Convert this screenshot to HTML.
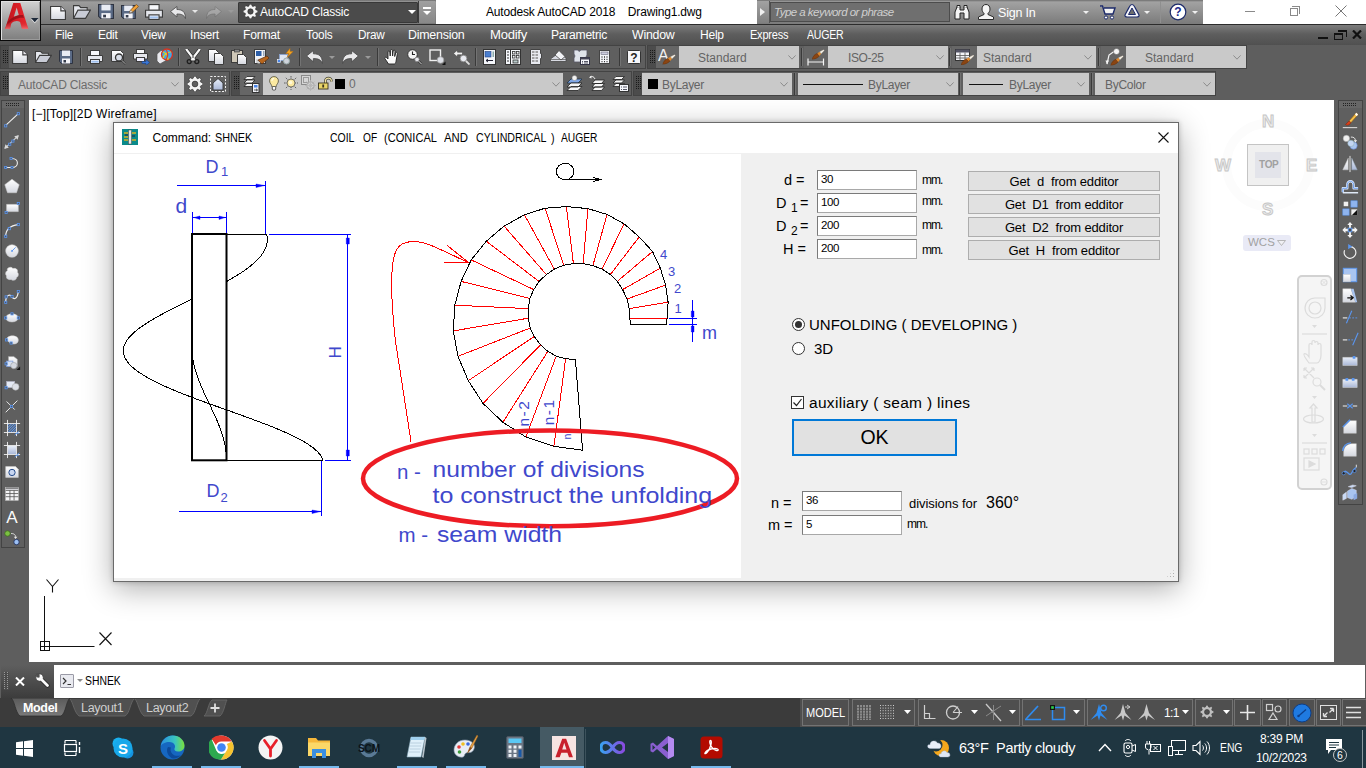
<!DOCTYPE html>
<html>
<head>
<meta charset="utf-8">
<title>AutoCAD</title>
<style>
html,body{margin:0;padding:0;}
body{width:1366px;height:768px;overflow:hidden;background:#5e5e5e;font-family:"Liberation Sans",sans-serif;position:relative;}
.abs{position:absolute;}
.t{position:absolute;white-space:nowrap;line-height:1;}
/* title */
#qat{left:0;top:0;width:436px;height:24px;background:linear-gradient(#6e6e6e 0,#9c9c9c 2px,#7a7a7a 23px);}
#titlew{left:436px;top:0;width:930px;height:24px;background:#fff;}
#srch{left:757px;top:0;width:446px;height:24px;background:linear-gradient(#6e6e6e 0,#a2a2a2 2px,#7c7c7c 23px);}
#appbtn{left:0;top:0;width:41px;height:41px;background:linear-gradient(#d2d2d2,#a8a8a8 45%,#7e7e7e);border:1px solid #0a0a0a;box-shadow:inset 1px 1px 0 #e0e0e0,inset -1px -1px 0 #9a9a9a;box-sizing:border-box;}
#menubar{left:0;top:24px;width:1366px;height:21px;background:linear-gradient(#7d7d7d 0%,#5e5e5e 45%,#505050 100%);border-top:1px solid #2c2c2c;box-sizing:border-box;}
.menu{position:absolute;top:28px;font-size:12.500px;letter-spacing:-.25px;color:#fff;white-space:nowrap;line-height:14px;}
.combo{position:absolute;background:#c9c9c9;box-sizing:border-box;}
.combo .t{color:#646464;font-size:12px;margin-top:1px;}
.tb{position:absolute;background:#5f5f5f;border:1px solid #434343;box-sizing:border-box;}
.grip{position:absolute;width:8px;height:22px;background:repeating-linear-gradient(0deg,#4c4c4c 0 1px,transparent 1px 2px) 2px 3px/5px 15px no-repeat,repeating-linear-gradient(90deg,#1a1a1a 0 1px,#4c4c4c 1px 2px) 2px 3px/5px 15px no-repeat,#4c4c4c;}
.sep{position:absolute;width:1px;height:18px;background:#3a3a3a;border-right:1px solid #737373;}
.vc{font-size:17px;font-weight:bold;color:#ebebeb;-webkit-text-stroke:.9px #c6c6c6;}
.sg{position:absolute;top:699px;height:27px;box-sizing:border-box;border:1px solid #737373;background:#4f4f4f;}
.ul{position:absolute;top:766px;width:40px;height:2px;background:#76b9ed;}
/* main */
#leftpal{left:1px;top:100px;width:24px;height:448px;background:#5f5f5f;border:1px solid #434343;box-sizing:border-box;}
#draw{left:29px;top:100px;width:1305px;height:562px;background:#fff;overflow:hidden;}
#rightpal{left:1338px;top:100px;width:25px;height:405px;background:#5f5f5f;border:1px solid #434343;box-sizing:border-box;}
#cmd{left:54px;top:665px;width:1311px;height:33px;background:#fff;}
#status{left:0;top:698px;width:1366px;height:29px;background:#3b3b3b;}
#taskbar{left:0;top:727px;width:1366px;height:41px;background:#1f3641;}
/* dialog */
#dlg{left:113px;top:122px;width:1066px;height:460px;background:#f0f0f0;border:1px solid #6a6a6a;box-sizing:border-box;box-shadow:0 0 5px rgba(0,0,0,.22),0 7px 28px rgba(0,0,0,.32);}
#dlgtitle{left:0;top:0;width:1064px;height:30px;background:#fff;}
#dlgpic{left:0;top:31px;width:627px;height:424px;background:#fff;overflow:hidden;}
.lb{color:#000;}
.inp{position:absolute;background:#fff;border:1px solid #7a7a7a;border-bottom-color:#a8a8a8;border-right-color:#a8a8a8;box-sizing:border-box;font-size:12px;}
.btn{position:absolute;background:#e1e1e1;border:1px solid #adadad;box-sizing:border-box;font-size:13px;letter-spacing:-.15px;text-align:center;color:#000;}
</style>
</head>
<body>
<!-- TITLE BAR -->
<div class="abs" id="qat"></div>
<div class="abs" id="titlew"></div>
<div class="abs" id="srch"></div>
<div class="abs" id="menubar"></div>
<div class="abs" id="appbtn"></div>

<!-- ICON DEFS -->
<svg width="0" height="0" style="position:absolute">
<defs>
<linearGradient id="gpaper" x1="0" y1="0" x2="0" y2="1"><stop offset="0" stop-color="#ffffff"/><stop offset="1" stop-color="#d5d8e0"/></linearGradient>
<linearGradient id="gblue" x1="0" y1="0" x2="0" y2="1"><stop offset="0" stop-color="#e8eef8"/><stop offset="1" stop-color="#aab8d8"/></linearGradient>
<symbol preserveAspectRatio="none" id="i-new" viewBox="1 2 14 13"><path d="M1.5 2.5h9l4 4v8h-13z" fill="url(#gpaper)" stroke="#3c3c3c" stroke-width="1"/><path d="M10.5 2.5v4h4" fill="#e8e8ee" stroke="#3c3c3c" stroke-width="1"/></symbol>
<symbol preserveAspectRatio="none" id="i-open" viewBox="1 3 16.500 11"><path d="M1.5 13.5v-10h5l1.5 1.5h6v2" fill="#e6e8ee" stroke="#3c3c3c"/><path d="M1.5 13.5l4-6.5h11.5l-4.5 6.5z" fill="#c9ccd6" stroke="#3c3c3c"/></symbol>
<symbol preserveAspectRatio="none" id="i-save" viewBox="1 1 14 14"><path d="M1.5 1.5h13v13h-11l-2-2z" fill="#5b6b86" stroke="#2e3340"/><rect x="4" y="1.5" width="8" height="5.5" fill="#e9ecf4"/><rect x="4" y="9.5" width="8" height="5" fill="#f4f4f8"/><rect x="5.5" y="11" width="2.5" height="2.5" fill="#333a4a"/></symbol>
<symbol preserveAspectRatio="none" id="i-saveas" viewBox="1 0 17 15"><path d="M1.5 1.5h13v13h-11l-2-2z" fill="#5b6b86" stroke="#2e3340"/><rect x="4" y="1.5" width="8" height="5.5" fill="#e9ecf4"/><rect x="4" y="9.5" width="8" height="5" fill="#f4f4f8"/><rect x="5.5" y="11" width="2.5" height="2.5" fill="#333a4a"/><path d="M9 9l1-3 5.5-5.5 2 2L12 8z" fill="#f2a33a" stroke="#7a4a10" stroke-width=".7"/><path d="M9 9l1-3 2 2z" fill="#fff" stroke="#555" stroke-width=".5"/></symbol>
<symbol preserveAspectRatio="none" id="i-print" viewBox="1 1 16 14"><rect x="4.5" y="1.5" width="9" height="5" fill="#f6f7fa" stroke="#3c3c3c"/><path d="M1.5 6.500h15v6h-15z" fill="#e4e6ec" stroke="#3c3c3c"/><rect x="4.500" y="10.500" width="9" height="4" fill="#dfe8f8" stroke="#3c3c3c"/><rect x="5.500" y="12" width="7" height="1.500" fill="#9fc0ee"/></symbol>
<symbol preserveAspectRatio="none" id="i-undo" viewBox="0.500 0.500 15 13"><path d="M1 6l6-5v3c5 0 8 2 8 9-1.500-3.500-3.500-4.500-8-4.500v3z" fill="#e8e8ea" stroke="#4a4a4a" stroke-width=".8"/></symbol>
<symbol preserveAspectRatio="none" id="i-redo" viewBox="0.500 0.500 15 13"><path d="M15 6l-6-5v3c-5 0-8 2-8 9 1.500-3.500 3.500-4.500 8-4.500v3z" fill="#e8e8ea" stroke="#4a4a4a" stroke-width=".8"/></symbol>
<symbol preserveAspectRatio="none" id="i-dd" viewBox="0 0 8 4"><path d="M0 0h8l-4 4z"/></symbol>
<symbol preserveAspectRatio="none" id="i-chev" viewBox="0 0 10 6"><path d="M.5.500l4.500 4.500 4.500-4.500" fill="none" stroke="#8a8a8a" stroke-width="1.200"/></symbol>
<symbol preserveAspectRatio="none" id="i-gear" viewBox="0.500 0.500 15 15"><path d="M13.32 6.24 L15.34 7.04 L15.34 8.96 L13.32 9.76 L13.00 10.51 L13.87 12.51 L12.51 13.87 L10.51 13.00 L9.76 13.32 L8.96 15.34 L7.04 15.34 L6.24 13.32 L5.49 13.00 L3.49 13.87 L2.13 12.51 L3.00 10.51 L2.68 9.76 L0.66 8.96 L0.66 7.04 L2.68 6.24 L3.00 5.49 L2.13 3.49 L3.49 2.13 L5.49 3.00 L6.24 2.68 L7.04 0.66 L8.96 0.66 L9.76 2.68 L10.51 3.00 L12.51 2.13 L13.87 3.49 L13.00 5.49Z M10.7 8 A2.7 2.7 0 1 0 5.3 8 A2.7 2.7 0 1 0 10.7 8Z" fill="#f4f4f4" fill-rule="evenodd" stroke="#2a2a2a" stroke-width=".6" stroke-linejoin="round"/></symbol>
<symbol preserveAspectRatio="none" id="i-brush" viewBox="0 0 13 10"><path d="M0 10C.8 7 2.800 4.800 5.500 3.800L7.700 6.500C5.500 8.700 3 9.700 0 10Z" fill="#8a4513" stroke="#5a2a08" stroke-width=".4"/><path d="M5.500 3.800L8 2.300 9.500 4.300 7.700 6.500Z" fill="#e0882a"/><path d="M8 2.300L12.400 0 13 .8 9.500 4.300Z" fill="#f6f2ea" stroke="#b8a890" stroke-width=".3"/></symbol>
</defs>
</svg>
<!-- QAT ICONS -->
<svg class="abs" style="left:50px;top:6px" width="16" height="14"><use href="#i-new" width="16" height="14"/></svg>
<svg class="abs" style="left:73px;top:5px" width="18" height="14"><use href="#i-open" width="18" height="14"/></svg>
<svg class="abs" style="left:98px;top:4px" width="16" height="15"><use href="#i-save" width="16" height="15"/></svg>
<svg class="abs" style="left:121px;top:4px" width="18" height="15"><use href="#i-saveas" width="18" height="15"/></svg>
<svg class="abs" style="left:145px;top:4px" width="18" height="16"><use href="#i-print" width="18" height="16"/></svg>
<svg class="abs" style="left:170px;top:6px" width="16" height="13"><use href="#i-undo" width="16" height="13"/></svg>
<svg class="abs" style="left:192px;top:10px;fill:#e6e6e6" width="6" height="3"><use href="#i-dd" width="6" height="3"/></svg>
<svg class="abs" style="left:206px;top:6px;opacity:.28" width="16" height="13"><use href="#i-redo" width="16" height="13"/></svg>
<svg class="abs" style="left:228px;top:10px;fill:#9a9a9a" width="6" height="3"><use href="#i-dd" width="6" height="3"/></svg>
<!-- workspace combo -->
<div class="abs" style="left:238px;top:2px;width:180px;height:21px;background:#4b4b4b;border:1px solid #383838;box-sizing:border-box;border-radius:1px"></div>
<svg class="abs" style="left:243px;top:4px" width="15" height="15"><use href="#i-gear" width="15" height="15"/></svg>
<div class="t" style="left:260px;top:6px;font-size:12px;color:#fff;letter-spacing:-.2px">AutoCAD Classic</div>
<svg class="abs" style="left:408px;top:10px;fill:#fff" width="8" height="5"><use href="#i-dd" width="8" height="4"/></svg>
<div class="abs" style="left:418px;top:1px;width:17px;height:22px;background:linear-gradient(#a0a0a0,#888);border-left:1px solid #3a3a3a;box-sizing:border-box"></div>
<div class="abs" style="left:423px;top:7px;width:8px;height:2px;background:#fff"></div>
<svg class="abs" style="left:423px;top:11px;fill:#fff" width="8" height="4"><use href="#i-dd" width="8" height="4"/></svg>
<!-- title text -->
<div class="t" style="left:486px;top:6px;font-size:12px;color:#000;letter-spacing:-.17px;white-space:pre">Autodesk AutoCAD 2018    Drawing1.dwg</div>


<!-- SEARCH AREA -->
<div class="abs" style="left:757px;top:1px;width:12px;height:22px;background:linear-gradient(#a2a2a2,#808080);border-right:1px solid #555"></div>
<svg class="abs" style="left:760px;top:8px" width="5" height="8"><path d="M0 0l5 4-5 4z" fill="#f0f0f0"/></svg>
<div class="abs" style="left:770px;top:2px;width:180px;height:20px;background:#6f6f6f;border:1px solid #4c4c4c;box-sizing:border-box"></div>
<div class="t" style="left:774px;top:7px;font-size:11.500px;font-style:italic;color:#cfcfcf;letter-spacing:-.52px">Type a keyword or phrase</div>
<svg class="abs" style="left:953px;top:4px" width="18" height="16" viewBox="0 0 18 16"><path d="M2 15v-7l2-5h3v3h4v-3h3l2 5v7h-5v-6h-4v6z" fill="#f4f4f4" stroke="#222" stroke-width="1"/><path d="M4 3.500v-2h3v2M11 3.500v-2h3v2" fill="#f4f4f4" stroke="#222"/></svg>
<svg class="abs" style="left:977px;top:3px" width="18" height="18" viewBox="0 0 18 18"><path d="M9 1.500c2.500 0 4 1.800 4 4.500 0 2-1 3.500-2 4.300v1.200l5.500 2.500v2.500h-15v-2.500l5.500-2.500v-1.200c-1-.8-2-2.300-2-4.300 0-2.700 1.500-4.500 4-4.500z" fill="#f6f6f6" stroke="#2a2a2a" stroke-width="1"/></svg>
<div class="t" style="left:998px;top:7px;font-size:12.500px;color:#fff;letter-spacing:-.2px">Sign In</div>
<svg class="abs" style="left:1083px;top:11px;fill:#f0f0f0" width="7" height="4"><use href="#i-dd" width="6" height="3"/></svg>
<svg class="abs" style="left:1099px;top:4px" width="18" height="16" viewBox="0 0 18 16"><path d="M1 2h2.500l2.500 8h8l2-6h-11" fill="#f4f4f4" stroke="#1c2a6a" stroke-width="1.400"/><circle cx="7" cy="13.500" r="1.600" fill="#fff" stroke="#1c2a6a"/><circle cx="13" cy="13.500" r="1.600" fill="#fff" stroke="#1c2a6a"/></svg>
<svg class="abs" style="left:1123px;top:3px" width="18" height="16" viewBox="0 0 18 16"><path d="M9 1.500c1.500 0 2 1 2.800 2.600l4 7.400c.8 1.600-.3 2.500-2 2.500h-9.600c-1.700 0-2.800-.9-2-2.500l4-7.400c.8-1.600 1.300-2.600 2.800-2.600z" fill="#f6f6fa" stroke="#1c2a6a" stroke-width="1.200"/><path d="M9 5l-3.500 6.500h7z" fill="#6e6e6e" stroke="#1c2a6a" stroke-width="1"/></svg>
<svg class="abs" style="left:1144px;top:11px;fill:#f0f0f0" width="7" height="4"><use href="#i-dd" width="6" height="3"/></svg>
<div class="abs" style="left:1160px;top:1px;width:1px;height:22px;background:#8f8f8f"></div>
<svg class="abs" style="left:1169px;top:3px" width="18" height="18" viewBox="0 0 18 18"><circle cx="9" cy="9" r="7.800" fill="#fff" stroke="#1c2a6a" stroke-width="1.200"/><text x="9" y="13.300" font-family="Liberation Sans" font-weight="bold" font-size="12" fill="#1c2a8a" text-anchor="middle">?</text></svg>
<svg class="abs" style="left:1192px;top:11px;fill:#f0f0f0" width="7" height="4"><use href="#i-dd" width="6" height="3"/></svg>
<!-- window controls -->
<div class="abs" style="left:1245px;top:11px;width:10px;height:1px;background:#8a8a8a"></div>
<div class="abs" style="left:1290px;top:8px;width:8px;height:8px;border:1px solid #8a8a8a;box-sizing:border-box"></div>
<div class="abs" style="left:1292px;top:6px;width:8px;height:8px;border-top:1px solid #8a8a8a;border-right:1px solid #8a8a8a;box-sizing:border-box"></div>
<svg class="abs" style="left:1335px;top:5px" width="12" height="12"><path d="M.5.500l11 11M11.500.500l-11 11" stroke="#777" stroke-width="1"/></svg>
<!-- MENU ITEMS -->
<div class="menu" style="left:55px;transform:scaleX(0.950);transform-origin:0 0">File</div>
<div class="menu" style="left:97.5px;transform:scaleX(0.954);transform-origin:0 0">Edit</div>
<div class="menu" style="left:141.3px;transform:scaleX(0.951);transform-origin:0 0">View</div>
<div class="menu" style="left:190px;transform:scaleX(0.974);transform-origin:0 0">Insert</div>
<div class="menu" style="left:243px;transform:scaleX(0.971);transform-origin:0 0">Format</div>
<div class="menu" style="left:305.5px;transform:scaleX(0.948);transform-origin:0 0">Tools</div>
<div class="menu" style="left:357.5px;transform:scaleX(0.941);transform-origin:0 0">Draw</div>
<div class="menu" style="left:408px;transform:scaleX(0.995);transform-origin:0 0">Dimension</div>
<div class="menu" style="left:489.5px;transform:scaleX(1.047);transform-origin:0 0">Modify</div>
<div class="menu" style="left:551px;transform:scaleX(0.967);transform-origin:0 0">Parametric</div>
<div class="menu" style="left:632.3px;transform:scaleX(0.989);transform-origin:0 0">Window</div>
<div class="menu" style="left:700.2px;transform:scaleX(0.963);transform-origin:0 0">Help</div>
<div class="menu" style="left:749.5px;transform:scaleX(0.880);transform-origin:0 0">Express</div>
<div class="menu" style="left:807px;transform:scaleX(0.845);transform-origin:0 0">AUGER</div>
<!-- MDI controls -->
<div class="abs" style="left:1318px;top:37px;width:10px;height:2px;background:#111"></div>
<div class="abs" style="left:1334px;top:33px;width:9px;height:7px;border:1px solid #111;border-top-width:2px;box-sizing:border-box"></div>
<div class="abs" style="left:1338px;top:30px;width:9px;height:7px;border-top:2px solid #111;border-right:1px solid #111;box-sizing:border-box"></div>
<svg class="abs" style="left:1352px;top:30px" width="10" height="9"><path d="M1 .500l8 8M9 .500l-8 8" stroke="#111" stroke-width="2.200"/></svg>
<!-- APP A logo -->
<svg class="abs" style="left:4px;top:2px" width="26" height="28" viewBox="0 0 26 28"><defs><linearGradient id="gA" x1="0" y1="0" x2="1" y2="0"><stop offset="0" stop-color="#b8141c"/><stop offset=".5" stop-color="#d81e26"/><stop offset="1" stop-color="#e8282e"/></linearGradient><linearGradient id="gA2" x1="0" y1="0" x2="0" y2="1"><stop offset=".7" stop-color="#d81e26" stop-opacity="0"/><stop offset="1" stop-color="#f08080" stop-opacity=".8"/></linearGradient></defs><path d="M1 27L9.300 1h7l8 26h-6.200l-2-7c-2.500-1.500-6-1.200-8.800 1.500l-1.500 5.500zM9.800 14.800l5-1.800-2.100-7.500z" fill="url(#gA)" fill-rule="evenodd"/><path d="M3.500 20c4-5 11-7.500 15.500-7l1 3c-5-.8-11 1-17.500 7.500z" fill="#8e0e16" opacity=".75"/><path d="M1 27L9.300 1h7l8 26h-6.200l-2-7c-2.500-1.500-6-1.200-8.800 1.500l-1.500 5.500zM9.800 14.800l5-1.800-2.100-7.500z" fill="url(#gA2)" fill-rule="evenodd"/></svg>
<svg class="abs" style="left:31px;top:18px" width="8" height="6"><path d="M0 1.200h7.500l-3.750 4z" fill="#e8e8e8"/><path d="M0 0h7.500l-3.750 4.300z" fill="#1e2a3a"/></svg>


<!-- TOOLBAR ROW 1 -->
<div class="tb" style="left:0;top:45px;width:646px;height:24px"></div>
<div class="tb" style="left:647px;top:45px;width:600px;height:24px"></div>
<div class="grip" style="left:1px;top:46px"></div>
<div class="grip" style="left:648px;top:46px"></div>
<svg class="abs" style="left:12px;top:50px" width="16" height="14"><use href="#i-new" width="16" height="14"/></svg>
<svg class="abs" style="left:35px;top:51px" width="17" height="12"><use href="#i-open" width="17" height="12"/></svg>
<svg class="abs" style="left:59px;top:50px" width="14" height="14"><use href="#i-save" width="14" height="14"/></svg>
<div class="sep" style="left:80px;top:48px"></div>
<svg class="abs" style="left:87px;top:50px" width="16" height="14"><use href="#i-print" width="16" height="14"/></svg>
<!-- preview -->
<svg class="abs" style="left:111px;top:49px" width="16" height="16" viewBox="0 0 16 16"><path d="M.5 1.500h9l3 3v8h-12z" fill="url(#gpaper)" stroke="#3c3c3c"/><circle cx="8" cy="8.500" r="3.500" fill="#d8dde8" stroke="#333" stroke-width="1.300"/><path d="M10.500 11l4 4" stroke="#333" stroke-width="2"/><path d="M10.800 11.300l3.500 3.500" stroke="#ddd" stroke-width=".8"/></svg>
<!-- publish -->
<svg class="abs" style="left:133px;top:49px" width="17" height="16" viewBox="0 0 17 16"><rect x="3.500" y=".5" width="8" height="4" fill="#f6f7fa" stroke="#3c3c3c"/><path d="M.5 4.500h14v5.500h-14z" fill="#e4e6ec" stroke="#3c3c3c"/><rect x="3.500" y="8.500" width="8" height="4" fill="#eef" stroke="#3c3c3c"/><path d="M9 12.500h4v-2l3.500 3-3.500 3v-2h-4z" fill="#3b78d8" stroke="#1d3f80" stroke-width=".6"/></svg>
<!-- 3dprint -->
<svg class="abs" style="left:156px;top:48px" width="17" height="17" viewBox="0 0 17 17"><path d="M1 6l4-3.500h6l-1 10-6 3.500-3-3z" fill="#e9e9ee" stroke="#555" stroke-width=".7"/><circle cx="11" cy="6.500" r="5.500" fill="#3fa7e8" stroke="#d8331f" stroke-width="1.300"/><path d="M7 4c3 1 5 4 5 8M15 4c-3 0-7 2-8 6" fill="none" stroke="#e8d21a" stroke-width="1.200"/><path d="M10 1.500c2 3 2 7 0 10" fill="none" stroke="#e23b2a" stroke-width="1.200"/></svg>
<div class="sep" style="left:178px;top:48px"></div>
<!-- cut -->
<svg class="abs" style="left:185px;top:49px" width="16" height="16" viewBox="0 0 16 16"><path d="M1.500 .5l8 10.500M14.500 .5l-8 10.500" stroke="#1e1e1e" stroke-width="3.400" stroke-linecap="round"/><path d="M1.500 .5l8 10.500M14.500 .5l-8 10.500" stroke="#f8f8f8" stroke-width="2.200" stroke-linecap="round"/><circle cx="4.200" cy="12.600" r="2" fill="none" stroke="#1e1e1e" stroke-width="1.300"/><circle cx="11.800" cy="12.600" r="2" fill="none" stroke="#1e1e1e" stroke-width="1.300"/><circle cx="8" cy="8" r=".8" fill="#1e1e1e"/></svg>
<!-- copy -->
<svg class="abs" style="left:208px;top:49px" width="17" height="16" viewBox="0 0 17 16"><path d="M.5.500h7l3 3v9h-10z" fill="url(#gpaper)" stroke="#3c3c3c"/><path d="M6.500 4.500h6l3 3v8h-9z" fill="url(#gpaper)" stroke="#3c3c3c"/></svg>
<!-- paste -->
<svg class="abs" style="left:231px;top:49px" width="17" height="16" viewBox="0 0 17 16"><rect x=".5" y="1.500" width="11" height="12" fill="#cfc8b8" stroke="#3c3c3c"/><rect x="3.500" y=".5" width="5" height="2.500" fill="#888" stroke="#333" stroke-width=".6"/><path d="M6.500 5.500h6l3 3v7h-9z" fill="url(#gpaper)" stroke="#3c3c3c"/></svg>
<!-- matchprop -->
<svg class="abs" style="left:254px;top:49px" width="17" height="16" viewBox="0 0 17 16"><rect x=".5" y=".5" width="11" height="14" fill="#f2f4f8" stroke="#3c3c3c"/><rect x="2" y="2" width="5.500" height="5" fill="#2d5fa8"/><rect x="9" y="2" width="1.500" height="5" fill="#9ab"/><path d="M4 11l4 4 7-6-2-2z" fill="#b5651d" stroke="#5a2d0c" stroke-width=".7"/><path d="M3 10.500l3 4.500-3-1z" fill="#fff" stroke="#777" stroke-width=".5"/></svg>
<!-- bedit -->
<svg class="abs" style="left:277px;top:48px" width="17" height="17" viewBox="0 0 17 17"><rect x="2.500" y="6.500" width="8" height="6" fill="#dfe6f2" stroke="#8aa0c8"/><rect x=".5" y="11.500" width="3" height="3" fill="#4a86e8" stroke="#fff" stroke-width=".6"/><circle cx="9.500" cy="13" r="3" fill="#d0d4dc" stroke="#9aa"/><path d="M13 .5l-4 5h3l-2 4 6-6h-3z" fill="#f6a623" stroke="#c8780a" stroke-width=".5"/></svg>
<div class="sep" style="left:299px;top:48px"></div>
<svg class="abs" style="left:306px;top:50px" width="17" height="14"><use href="#i-undo" width="17" height="14"/></svg>
<svg class="abs" style="left:329px;top:56px;fill:#9a9a9a" width="6" height="3"><use href="#i-dd" width="6" height="3"/></svg>
<svg class="abs" style="left:342px;top:50px" width="17" height="14"><use href="#i-redo" width="17" height="14"/></svg>
<svg class="abs" style="left:365px;top:56px;fill:#9a9a9a" width="6" height="3"><use href="#i-dd" width="6" height="3"/></svg>
<div class="sep" style="left:377px;top:48px"></div>
<!-- pan hand -->
<svg class="abs" style="left:384px;top:49px" width="16" height="16" viewBox="0 0 16 16"><path d="M4.500 15c-1-2-3-4-4-6 .5-1 1.500-1 2.500 0l1 1v-7c0-1.300 1.600-1.300 1.800 0l.4 4 .3-5.500c0-1.300 1.800-1.300 1.900 0l.2 5.500.6-5c.2-1.200 1.800-1.100 1.800.1l-.3 5.400 1-3.500c.4-1.100 1.800-.8 1.700.4l-1.400 8c-.3 1.500-1 2.600-1.500 2.600z" fill="#fafafa" stroke="#222" stroke-width=".9"/></svg>
<!-- zoom rt -->
<svg class="abs" style="left:407px;top:49px" width="16" height="16" viewBox="0 0 16 16"><circle cx="5.500" cy="5.500" r="4.800" fill="#f4f4f4" stroke="#333" stroke-width="1"/><path d="M5.500 2.500v3h2.500" fill="none" stroke="#222" stroke-width="1.100"/><path d="M9 9.500l5.500 5.500" stroke="#333" stroke-width="2.400"/><path d="M9.500 10l5 5" stroke="#ddd" stroke-width="1"/><circle cx="10" cy="10.500" r="2.200" fill="#e8e8ee" stroke="#777" stroke-width=".6"/></svg>
<!-- zoom window -->
<svg class="abs" style="left:429px;top:49px" width="17" height="16" viewBox="0 0 17 16"><rect x="1" y="1" width="10.500" height="10.500" fill="none" stroke="#f0f0f0" stroke-width="1.400"/><circle cx="11.500" cy="11" r="3.300" fill="#dcdfe6" stroke="#999" stroke-width=".7"/><path d="M16.500 12.500v3.500h-3.500z" fill="#111"/></svg>
<!-- zoom prev -->
<svg class="abs" style="left:453px;top:49px" width="17" height="16" viewBox="0 0 17 16"><path d="M.5 4.500l4-3.500v2.200h5v2.600h-5v2.200z" fill="#f2f2f2" stroke="#444" stroke-width=".6"/><circle cx="10.500" cy="9.500" r="3.300" fill="#e8eaf0" stroke="#888" stroke-width=".8"/><path d="M13 12l3.500 3.500" stroke="#ddd" stroke-width="1.800"/></svg>
<div class="sep" style="left:475px;top:48px"></div>
<!-- properties -->
<svg class="abs" style="left:483px;top:49px" width="13" height="16" viewBox="0 0 13 16"><rect x=".5" y=".5" width="12" height="15" fill="#f4f6fa" stroke="#333"/><rect x="2" y="2.500" width="6" height="5.500" fill="#4a7fd0" stroke="#1f3f80" stroke-width=".6"/><rect x="9.500" y="2.500" width="1.500" height="5.500" fill="#8aa"/><path d="M3 11.500h7M3 11.500l2-1.500M3 11.500l2 1.500" stroke="#223" stroke-width="1" fill="none"/></svg>
<!-- designcenter -->
<svg class="abs" style="left:505px;top:49px" width="16" height="16" viewBox="0 0 16 16"><rect x=".5" y=".5" width="15" height="15" fill="#f4f6fa" stroke="#333"/><path d="M5.500.500v15" stroke="#333"/><path d="M2 3h2M2 6h2M2 9h2M2 12h2" stroke="#333" stroke-width="1.200"/><rect x="7.500" y="2.500" width="2.500" height="2.500" fill="none" stroke="#333" stroke-width=".8"/><rect x="11.500" y="2.500" width="2.500" height="2.500" fill="none" stroke="#333" stroke-width=".8"/><rect x="7.500" y="6.500" width="2.500" height="2.500" fill="none" stroke="#333" stroke-width=".8"/><rect x="11.500" y="6.500" width="2.500" height="2.500" fill="none" stroke="#333" stroke-width=".8"/><rect x="8" y="11" width="5" height="3" fill="#bcc" stroke="#333" stroke-width=".8"/></svg>
<!-- toolpalettes -->
<svg class="abs" style="left:530px;top:49px" width="12" height="16" viewBox="0 0 12 16"><path d="M.5.500h10v4h1v5h-1v6h-10z" fill="#e8eaf0" stroke="#444"/><path d="M2 3h2.500M5.500 3h2.500M2 6h2.500M5.500 6h2.500M2 9h2.500M5.500 9h2.500M2 12h2.500M5.500 12h2.500" stroke="#888" stroke-width="1.600"/></svg>
<!-- sheetset -->
<svg class="abs" style="left:550px;top:50px" width="17" height="14" viewBox="0 0 17 14"><path d="M.5 9l8-6 7.500 5v3.500h-15.500z" fill="#d8dae2" stroke="#444" stroke-width=".7"/><path d="M5 5l4-4.500 6 6-4 3.500z" fill="#f2f3f6" stroke="#444" stroke-width=".8"/><path d="M.5 11.500h15.500M.5 9.500h15.500" stroke="#555" stroke-width=".7"/></svg>
<!-- markup -->
<svg class="abs" style="left:573px;top:49px" width="17" height="17" viewBox="0 0 17 17"><path d="M1 1h4l1 1.500 2-1.500h6v5l-1 2 1 2v3h-13v-4l1-2-1-2z" fill="#dfe3ea" stroke="#556" stroke-width=".8"/><rect x="7.500" y="8.500" width="9" height="7" fill="#f6f7fb" stroke="#334" /><rect x="7.500" y="8.500" width="9" height="2" fill="#445"/><path d="M9 12.500h1M11 12.500h4M9 14h1M11 14h4" stroke="#445" stroke-width=".9"/></svg>
<!-- calc -->
<svg class="abs" style="left:599px;top:50px" width="11" height="14" viewBox="0 0 11 14"><rect x=".5" y=".5" width="10" height="13" fill="#f4f5f8" stroke="#444"/><rect x="2" y="2" width="7" height="2.500" fill="#ccd" stroke="#556" stroke-width=".5"/><path d="M2.500 7h1M5 7h1M7.500 7h1M2.500 9.300h1M5 9.300h1M7.500 9.300h1M2.500 11.600h1M5 11.600h1M7.500 11.600h1" stroke="#333" stroke-width="1.300"/></svg>
<div class="sep" style="left:619px;top:48px"></div>
<!-- help -->
<svg class="abs" style="left:627px;top:50px" width="14" height="14" viewBox="0 0 14 14"><rect x=".5" y=".5" width="13" height="13" rx="1" fill="#f6f6f8" stroke="#333"/><text x="7" y="11.500" font-family="Liberation Sans" font-weight="bold" font-size="12" fill="#222" text-anchor="middle">?</text></svg>
<!-- styles toolbar -->
<div class="abs" style="left:656px;top:46px;width:23px;height:22px;background:#666"></div>
<svg class="abs" style="left:658px;top:48px" width="18" height="18" viewBox="0 0 18 18"><text x="0" y="13" font-family="Liberation Sans" font-size="16" fill="#f2f2f2">A</text><use href="#i-brush" x="4.500" y="6.500" width="13" height="10"/></svg>
<div class="combo" style="left:679px;top:46px;width:120px;height:22px"><div class="t" style="left:19px;top:5px">Standard</div></div>
<svg class="abs" style="left:788px;top:55px" width="8" height="5"><use href="#i-chev" width="8" height="5"/></svg>
<div class="sep" style="left:801px;top:48px"></div>
<div class="abs" style="left:804px;top:46px;width:24px;height:22px;background:#666"></div>
<svg class="abs" style="left:807px;top:48px" width="18" height="18" viewBox="0 0 18 18"><path d="M1 10.500v7M16.500 10.500v7M1 14h15.500" stroke="#f4f4f4" stroke-width="1.200" fill="none"/><use href="#i-brush" x="5" y="1.500" width="12.500" height="10"/></svg>
<div class="combo" style="left:828px;top:46px;width:120px;height:22px"><div class="t" style="left:20px;top:5px;letter-spacing:-.4px">ISO-25</div></div>
<svg class="abs" style="left:936px;top:55px" width="8" height="5"><use href="#i-chev" width="8" height="5"/></svg>
<div class="sep" style="left:949px;top:48px"></div>
<div class="abs" style="left:952px;top:46px;width:25px;height:22px;background:#666"></div>
<svg class="abs" style="left:955px;top:48px" width="19" height="18" viewBox="0 0 19 18"><rect x=".5" y="1.500" width="14" height="11" fill="#f4f4f8" stroke="#333"/><rect x=".5" y="1.500" width="14" height="3" fill="#556"/><path d="M.5 7.500h14M.5 10h14M5 4.500v8M10 4.500v8" stroke="#555" stroke-width=".8"/><use href="#i-brush" x="6" y="7" width="13" height="10"/></svg>
<div class="combo" style="left:977px;top:46px;width:119px;height:22px"><div class="t" style="left:6px;top:5px">Standard</div></div>
<svg class="abs" style="left:1084px;top:55px" width="8" height="5"><use href="#i-chev" width="8" height="5"/></svg>
<div class="sep" style="left:1098px;top:48px"></div>
<div class="abs" style="left:1101px;top:46px;width:25px;height:22px;background:#666"></div>
<svg class="abs" style="left:1105px;top:48px" width="19" height="18" viewBox="0 0 19 18"><path d="M2 16l2-9 5-3.500" fill="none" stroke="#f4f4f4" stroke-width="1.200"/><path d="M2 16.500l-1.500-4h3.500z" fill="#f4f4f4"/><circle cx="11.500" cy="3.500" r="3" fill="#f6f6f6" stroke="#555" stroke-width=".5"/><use href="#i-brush" x="5.500" y="7.500" width="13" height="10"/></svg>
<div class="combo" style="left:1126px;top:46px;width:120px;height:22px"><div class="t" style="left:19px;top:5px">Standard</div></div>
<svg class="abs" style="left:1233px;top:55px" width="8" height="5"><use href="#i-chev" width="8" height="5"/></svg>


<!-- TOOLBAR ROW 2 -->
<div class="tb" style="left:0;top:71px;width:230px;height:25px"></div>
<div class="tb" style="left:231px;top:71px;width:401px;height:25px"></div>
<div class="tb" style="left:633px;top:71px;width:583px;height:25px"></div>
<div class="grip" style="left:1px;top:72px;height:23px"></div>
<div class="grip" style="left:232px;top:72px;height:23px"></div>
<div class="grip" style="left:634px;top:72px;height:23px"></div>
<div class="combo" style="left:9px;top:73px;width:175px;height:22px"><div class="t" style="left:9px;top:5px;letter-spacing:-.2px;color:#6c6c6c">AutoCAD Classic</div></div>
<svg class="abs" style="left:171px;top:82px" width="8" height="5"><use href="#i-chev" width="8" height="5"/></svg>
<svg class="abs" style="left:187px;top:76px" width="16" height="16"><use href="#i-gear" width="16" height="16"/></svg>
<svg class="abs" style="left:209px;top:75px" width="18" height="18" viewBox="0 0 18 18"><rect x="1.500" y="1.500" width="15" height="15" fill="none" stroke="#f0f0f0" stroke-width="1" stroke-dasharray="2 1.500"/><path d="M4 15v-7l5-4.500 5 4.500v7z" fill="url(#gblue)" stroke="#333" stroke-width=".9"/></svg>
<!-- layers -->
<div class="abs" style="left:240px;top:72px;width:23px;height:23px;background:#666"></div>
<svg class="abs" style="left:243px;top:75px" width="17" height="18" viewBox="0 0 17 18"><path d="M4 1.500h8l-3 3h-8zM4 5h8l-3 3h-8zM4 8.500h8l-3 3h-8z" fill="#f6f6f6" stroke="#222" stroke-width=".8"/><rect x="9.500" y="8.500" width="6.500" height="9" fill="#f0f2f8" stroke="#333"/><rect x="11" y="10" width="3.500" height="2.500" fill="#4a86e8"/><path d="M11 15h3.500M13 13.800l1.500 1.200-1.500 1.200" stroke="#333" stroke-width=".8" fill="none"/></svg>
<div class="combo" style="left:263px;top:73px;width:300px;height:22px"></div>
<!-- bulb -->
<svg class="abs" style="left:269px;top:76px" width="10" height="15" viewBox="0 0 10 15"><path d="M5 .600c2.600 0 4.400 1.900 4.400 4.300 0 2-1.300 2.800-2 4.600l-.4 1.500h-4l-.4-1.500c-.7-1.800-2-2.600-2-4.600 0-2.400 1.800-4.300 4.400-4.300z" fill="#fbe9a0" stroke="#4a4a3a" stroke-width=".8"/><path d="M3 5a2.300 2.300 0 0 1 2-2.600" stroke="#fffbe6" stroke-width="1.100" fill="none"/><rect x="3.300" y="10.500" width="3.400" height="3.500" rx="1" fill="#fafafa" stroke="#333" stroke-width=".8"/></svg>
<!-- sun -->
<svg class="abs" style="left:284px;top:76px" width="14" height="14" viewBox="0 0 14 14"><path d="M7 0v14M0 7h14M1.800 1.800l10.400 10.400M12.200 1.800l-10.400 10.400" stroke="#4a4a4a" stroke-width=".8" stroke-dasharray="1.600 1"/><circle cx="7" cy="7" r="4" fill="#fbe9a0" stroke="#555" stroke-width=".8"/><circle cx="6.500" cy="6.500" r="1.800" fill="#fff8d8"/></svg>
<!-- vp freeze -->
<svg class="abs" style="left:301px;top:75px" width="15" height="16" viewBox="0 0 15 16"><rect x=".5" y=".5" width="9" height="9" fill="#d6d6d6" stroke="#8a8a8a"/><rect x="2.500" y="2.500" width="5" height="5" fill="none" stroke="#9a9a9a"/><circle cx="9.500" cy="10.500" r="3.800" fill="#cfcfcf" stroke="#a8a8a8"/><path d="M9.500 5v11M4 10.500h11M5.500 6.500l8 8M13.500 6.500l-8 8" stroke="#b4b4b4" stroke-width=".8"/></svg>
<!-- lock -->
<svg class="abs" style="left:318px;top:76px" width="15" height="14" viewBox="0 0 15 14"><path d="M7.500 7v-2.500c0-3.200 5.800-3.200 5.800 0v1" fill="none" stroke="#3a3a2a" stroke-width="2.600"/><path d="M7.500 7v-2.500c0-3.200 5.800-3.200 5.800 0v1" fill="none" stroke="#f0e2a8" stroke-width="1.300"/><rect x=".5" y="7" width="9.500" height="6" fill="#e8d468" stroke="#3a3420" stroke-width=".9"/><rect x="4.300" y="8.500" width="1.800" height="3" fill="#3a3420"/></svg>
<div class="abs" style="left:335px;top:79px;width:10px;height:10px;background:#000"></div>
<div class="t" style="left:349px;top:78px;font-size:12px;color:#6c6c6c">0</div>
<svg class="abs" style="left:552px;top:82px" width="8" height="5"><use href="#i-chev" width="8" height="5"/></svg>
<!-- layer tools -->
<svg class="abs" style="left:566px;top:75px" width="17" height="17" viewBox="0 0 17 17"><path d="M5 4h11l-4 4h-11z" fill="#7fa6e6" stroke="#234" stroke-width=".8"/><path d="M5 8h11l-4 4h-11zM5 11.500h11l-4 4h-11z" fill="#f6f6f6" stroke="#222" stroke-width=".8"/><circle cx="8.500" cy="3" r="2.500" fill="#f2f2f2" stroke="#888" stroke-width=".5"/></svg>
<svg class="abs" style="left:589px;top:75px" width="16" height="17" viewBox="0 0 16 17"><path d="M6 5h9.500l-3 3.500h-9.500zM6 8.500h9.500l-3 3.500h-9.500zM6 12h9.500l-3 3.500h-9.500z" fill="#f6f6f6" stroke="#222" stroke-width=".8"/><path d="M6 4c-1-2.500-3-3-5-2" fill="none" stroke="#f0f0f0" stroke-width="1"/><path d="M0 2.500l2.500-2v3z" fill="#f0f0f0"/></svg>
<svg class="abs" style="left:612px;top:75px" width="17" height="17" viewBox="0 0 17 17"><path d="M4 1.500h8.500l-3 3h-8.500zM4 5h8.500l-3 3h-8.500zM4 8.500h8.500l-3 3h-8.500z" fill="#f6f6f6" stroke="#222" stroke-width=".8"/><rect x="7.500" y="9.500" width="9" height="7" fill="#f6f7fb" stroke="#333"/><path d="M9 12h1M11 12h4M9 14.500h1M11 14.500h4" stroke="#445" stroke-width=".9"/></svg>
<!-- properties toolbar -->
<div class="combo" style="left:642px;top:73px;width:150px;height:22px"><div class="t" style="left:20px;top:5px;letter-spacing:-.3px">ByLayer</div></div>
<div class="abs" style="left:648px;top:79px;width:10px;height:10px;background:#000"></div>
<svg class="abs" style="left:780px;top:82px" width="8" height="5"><use href="#i-chev" width="8" height="5"/></svg>
<div class="sep" style="left:794px;top:73px;height:22px"></div>
<div class="combo" style="left:798px;top:73px;width:160px;height:22px"><div class="t" style="left:70px;top:5px;letter-spacing:-.3px">ByLayer</div></div>
<div class="abs" style="left:803px;top:84px;width:60px;height:1px;background:#111"></div>
<svg class="abs" style="left:946px;top:82px" width="8" height="5"><use href="#i-chev" width="8" height="5"/></svg>
<div class="sep" style="left:959px;top:73px;height:22px"></div>
<div class="combo" style="left:963px;top:73px;width:126px;height:22px"><div class="t" style="left:46px;top:5px;letter-spacing:-.3px">ByLayer</div></div>
<div class="abs" style="left:969px;top:84px;width:34px;height:1px;background:#111"></div>
<svg class="abs" style="left:1077px;top:82px" width="8" height="5"><use href="#i-chev" width="8" height="5"/></svg>
<div class="sep" style="left:1091px;top:73px;height:22px"></div>
<div class="combo" style="left:1095px;top:73px;width:120px;height:22px"><div class="t" style="left:10px;top:5px;letter-spacing:-.3px">ByColor</div></div>
<svg class="abs" style="left:1203px;top:82px" width="8" height="5"><use href="#i-chev" width="8" height="5"/></svg>

<!-- MAIN -->
<div class="abs" id="leftpal"></div>
<div class="abs" id="draw"></div>
<div class="abs" id="rightpal"></div>
<div class="abs" id="cmd"></div>
<div class="abs" id="status"></div>
<div class="abs" id="taskbar"></div>
<!-- LEFT PALETTE ICONS -->
<div class="abs" style="left:2px;top:101px;width:22px;height:7px;background:#676767"></div><div class="abs" style="left:6px;top:103px;width:14px;height:4px;background:repeating-linear-gradient(0deg,#676767 0 1px,transparent 1px 2px),repeating-linear-gradient(90deg,#222 0 1px,#676767 1px 2px)"></div>
<svg class="abs" style="left:3px;top:111px" width="18" height="18" viewBox="0 0 20 20"><path d="M3 16L17 3" stroke="#f0f0f0" stroke-width="1.200"/><rect x="1.8" y="15.3" width="2.400" height="2.400" fill="#50555f" stroke="#5a96f0" stroke-width=".9"/><rect x="15.8" y="1.8" width="2.400" height="2.400" fill="#50555f" stroke="#5a96f0" stroke-width=".9"/></svg>
<svg class="abs" style="left:3px;top:133px" width="18" height="18" viewBox="0 0 20 20"><path d="M2 17L17 3" stroke="#d8d8d8" stroke-width="1.200"/><path d="M17.500 2.500l-5 1.200 3.800 3.800zM1.500 17.500l5-1.200-3.800-3.800z" fill="#d8d8d8"/><rect x="6.3" y="11.3" width="2.400" height="2.400" fill="#50555f" stroke="#5a96f0" stroke-width=".9"/><rect x="9.8" y="7.8" width="2.400" height="2.400" fill="#50555f" stroke="#5a96f0" stroke-width=".9"/></svg>
<svg class="abs" style="left:3px;top:154px" width="18" height="18" viewBox="0 0 20 20"><path d="M3 15h7c8 0 8-10 0-10h-1" fill="none" stroke="#f0f0f0" stroke-width="1.200"/><rect x="1.8" y="13.8" width="2.400" height="2.400" fill="#50555f" stroke="#5a96f0" stroke-width=".9"/><rect x="8.8" y="13.8" width="2.400" height="2.400" fill="#50555f" stroke="#5a96f0" stroke-width=".9"/><rect x="7.8" y="3.8" width="2.400" height="2.400" fill="#50555f" stroke="#5a96f0" stroke-width=".9"/></svg>
<svg class="abs" style="left:3px;top:177px" width="18" height="18" viewBox="0 0 20 20"><path d="M10 2.500l8 6-3 9h-10l-3-9z" fill="url(#gpaper)" stroke="#ccc" stroke-width=".6"/></svg>
<svg class="abs" style="left:3px;top:199px" width="18" height="18" viewBox="0 0 20 20"><path d="M4 6h13v8h-13z" fill="url(#gpaper)" stroke="#ccc" stroke-width=".6"/><rect x="2.3" y="13.8" width="2.400" height="2.400" fill="#50555f" stroke="#5a96f0" stroke-width=".9"/><rect x="15.8" y="3.8" width="2.400" height="2.400" fill="#50555f" stroke="#5a96f0" stroke-width=".9"/></svg>
<svg class="abs" style="left:3px;top:221px" width="18" height="18" viewBox="0 0 20 20"><path d="M3 17c0-8 5-12 14-13" fill="none" stroke="#f0f0f0" stroke-width="1.200"/><rect x="1.8" y="15.8" width="2.400" height="2.400" fill="#50555f" stroke="#5a96f0" stroke-width=".9"/><rect x="5.8" y="7.3" width="2.400" height="2.400" fill="#50555f" stroke="#5a96f0" stroke-width=".9"/><rect x="15.8" y="2.8" width="2.400" height="2.400" fill="#50555f" stroke="#5a96f0" stroke-width=".9"/></svg>
<svg class="abs" style="left:3px;top:242px" width="18" height="18" viewBox="0 0 20 20"><circle cx="10" cy="10" r="7" fill="url(#gpaper)" stroke="#ccc" stroke-width=".6"/><path d="M10 10l4-4" stroke="#5a96f0" stroke-width="1"/><circle cx="10" cy="10" r="1" fill="#5a96f0"/></svg>
<svg class="abs" style="left:3px;top:265px" width="18" height="18" viewBox="0 0 20 20"><path d="M5 4c2-2 5-2 6 0 3-1 6 1 5 4 2 2 1 5-1 6 0 3-4 4-6 2-3 1-6-1-5-4-2-2-1-5 1-6-.5-1 0-2 0-2z" fill="url(#gpaper)" stroke="#ccc" stroke-width=".6"/></svg>
<svg class="abs" style="left:3px;top:287px" width="18" height="18" viewBox="0 0 20 20"><path d="M3 17c0-9 5-9 7-6s6 3 7-6" fill="none" stroke="#f0f0f0" stroke-width="1.400"/><rect x="1.8" y="15.8" width="2.400" height="2.400" fill="#50555f" stroke="#5a96f0" stroke-width=".9"/><rect x="2.3" y="9.8" width="2.400" height="2.400" fill="#50555f" stroke="#5a96f0" stroke-width=".9"/><rect x="8.8" y="9.3" width="2.400" height="2.400" fill="#50555f" stroke="#5a96f0" stroke-width=".9"/><rect x="15.8" y="3.8" width="2.400" height="2.400" fill="#50555f" stroke="#5a96f0" stroke-width=".9"/></svg>
<svg class="abs" style="left:3px;top:308px" width="18" height="18" viewBox="0 0 20 20"><ellipse cx="10" cy="11" rx="7" ry="4.500" fill="url(#gpaper)" stroke="#ccc" stroke-width=".6"/><rect x="1.8" y="9.8" width="2.400" height="2.400" fill="#50555f" stroke="#5a96f0" stroke-width=".9"/><rect x="8.8" y="5.3" width="2.400" height="2.400" fill="#50555f" stroke="#5a96f0" stroke-width=".9"/><rect x="15.8" y="9.8" width="2.400" height="2.400" fill="#50555f" stroke="#5a96f0" stroke-width=".9"/></svg>
<svg class="abs" style="left:3px;top:330px" width="18" height="18" viewBox="0 0 20 20"><path d="M4 11c0-6 13-6 13 0s-8 5-10 3" fill="url(#gpaper)" stroke="#ccc" stroke-width=".6"/><rect x="2.8" y="9.8" width="2.400" height="2.400" fill="#50555f" stroke="#5a96f0" stroke-width=".9"/><rect x="7.8" y="13.3" width="2.400" height="2.400" fill="#50555f" stroke="#5a96f0" stroke-width=".9"/></svg>
<svg class="abs" style="left:3px;top:353px" width="18" height="18" viewBox="0 0 20 20"><path d="M6 4h6l4 3v8h-10z" fill="url(#gpaper)" stroke="#999" stroke-width=".6"/><rect x="4" y="9" width="7" height="6" fill="#d8e2f4" stroke="#7a9ad8" stroke-width=".8"/><circle cx="12" cy="14" r="3.500" fill="#d4d8e0" stroke="#999" stroke-width=".6"/><rect x="2.3" y="10.8" width="2.400" height="2.400" fill="#50555f" stroke="#5a96f0" stroke-width=".9"/><path d="M19 15v4h-4z" fill="#111"/></svg>
<svg class="abs" style="left:3px;top:376px" width="18" height="18" viewBox="0 0 20 20"><rect x="4" y="6" width="9" height="7" fill="#e4e9f4" stroke="#aab" stroke-width=".7"/><circle cx="14" cy="12" r="3.800" fill="#dcdfe6" stroke="#aaa" stroke-width=".6"/><rect x="2.3" y="11.8" width="2.400" height="2.400" fill="#50555f" stroke="#5a96f0" stroke-width=".9"/></svg>
<svg class="abs" style="left:3px;top:397px" width="18" height="18" viewBox="0 0 20 20"><path d="M3 17L16 4M4 5l9 9" stroke="#e8e8e8" stroke-width="1.100"/><rect x="8.3" y="9.3" width="2.400" height="2.400" fill="#50555f" stroke="#5a96f0" stroke-width=".9"/></svg>
<svg class="abs" style="left:3px;top:419px" width="18" height="18" viewBox="0 0 20 20"><defs><pattern id="hp" width="2" height="2" patternUnits="userSpaceOnUse" patternTransform="rotate(45)"><rect width="1" height="2" fill="#5a96f0"/></pattern></defs><path d="M5 1v18M15 1v18M1 5h18M1 15h18" stroke="#f0f0f0" stroke-width="1"/><rect x="5.500" y="5.500" width="9" height="9" fill="url(#hp)"/><path d="M13 18l5-5" stroke="#5a96f0" stroke-width="1"/><path d="M14 16h4" stroke="#5a96f0" stroke-width=".8"/></svg>
<svg class="abs" style="left:3px;top:441px" width="18" height="18" viewBox="0 0 20 20"><path d="M5 1v18M15 1v18M1 5h18M1 15h18" stroke="#f0f0f0" stroke-width="1"/><rect x="5.500" y="5.500" width="9" height="9" fill="url(#gblue)"/><path d="M13 18l5-5" stroke="#5a96f0" stroke-width="1"/><path d="M14 16h4" stroke="#5a96f0" stroke-width=".8"/></svg>
<svg class="abs" style="left:3px;top:463px" width="18" height="18" viewBox="0 0 20 20"><path d="M3 4h11l3 3v9h-14z" fill="url(#gpaper)" stroke="#ccc" stroke-width=".6"/><circle cx="10" cy="10.500" r="3.500" fill="#c8d6f0" stroke="#234a8a" stroke-width="1.100"/></svg>
<svg class="abs" style="left:3px;top:485px" width="18" height="18" viewBox="0 0 20 20"><rect x="3" y="3" width="14" height="14" fill="#f4f4f6" stroke="#ccc" stroke-width=".6"/><rect x="3" y="3" width="14" height="3" fill="#e0e0e4"/><path d="M3 6h14M3 9.500h14M3 13h14M7.700 6v11M12.300 6v11" stroke="#555" stroke-width=".9"/><path d="M3 3.500h14" stroke="#444" stroke-width="1"/></svg>
<svg class="abs" style="left:3px;top:507px" width="18" height="18" viewBox="0 0 20 20"><text x="10" y="17.500" font-family="Liberation Sans" font-size="19" fill="#fafafa" text-anchor="middle">A</text></svg>
<svg class="abs" style="left:3px;top:529px" width="18" height="18" viewBox="0 0 20 20"><circle cx="5" cy="5" r="3" fill="#7bc043" stroke="#3a6a1a" stroke-width=".8"/><circle cx="15" cy="14.500" r="3" fill="#9cc0f4" stroke="#1a2a5a" stroke-width=".9"/><path d="M9 5c4 0 5 2 5 4" fill="none" stroke="#e8e8e8" stroke-width="1"/><path d="M12 8.500l2 2.500 2-2.500z" fill="#e8e8e8"/></svg>
<!-- RIGHT PALETTE ICONS -->
<div class="abs" style="left:1339px;top:101px;width:23px;height:7px;background:#676767"></div><div class="abs" style="left:1343px;top:103px;width:14px;height:4px;background:repeating-linear-gradient(0deg,#676767 0 1px,transparent 1px 2px),repeating-linear-gradient(90deg,#222 0 1px,#676767 1px 2px)"></div>
<svg class="abs" style="left:1341px;top:111px" width="18" height="18" viewBox="0 0 20 20"><path d="M17 2l-8 9 2 2 8-9z" fill="#f6c04a" stroke="#8a5a10" stroke-width=".6"/><path d="M17 2l2 2-1.500 1.700-2-2z" fill="#fff"/><path d="M9 11l-4 4c1 1 3 1 4.500 0l1.500-2z" fill="#d8401a" stroke="#7a200a" stroke-width=".5"/><path d="M2 18.500h16" stroke="#f0f0f0" stroke-width="1"/></svg>
<svg class="abs" style="left:1341px;top:133px" width="18" height="18" viewBox="0 0 20 20"><circle cx="6" cy="6" r="3.500" fill="#f0f0f0" stroke="#aaa" stroke-width=".5"/><circle cx="14" cy="14" r="4" fill="#a8c4f0" stroke="#6a8ad0" stroke-width=".7"/><circle cx="11" cy="11.500" r="3.500" fill="#c4d6f4" stroke="#8aa" stroke-width=".5"/><path d="M11 4.500c3 0 5 1 5 4" fill="none" stroke="#f0f0f0" stroke-width="1"/><path d="M14 8l2 2.500 2-2.500z" fill="#f0f0f0"/></svg>
<svg class="abs" style="left:1341px;top:155px" width="18" height="18" viewBox="0 0 20 20"><path d="M10 1v18" stroke="#f0f0f0" stroke-width="1"/><path d="M8 3.500v13h-6z" fill="url(#gpaper)" stroke="#ccc" stroke-width=".5"/><path d="M12 3.500v13h6z" fill="url(#gblue)" stroke="#9ab" stroke-width=".5"/></svg>
<svg class="abs" style="left:1341px;top:177px" width="18" height="18" viewBox="0 0 20 20"><path d="M2 17v-4.500h5v-4c0-5 7-5 7 0v4h5" fill="none" stroke="#e4eefc" stroke-width="2.600" stroke-linejoin="round"/><path d="M2 17v-4.500h5v-4c0-5 7-5 7 0v4h5" fill="none" stroke="#4a86e8" stroke-width=".9" stroke-linejoin="round"/><path d="M2 17.500h17" stroke="#e4eefc" stroke-width="1.600"/></svg>
<svg class="abs" style="left:1341px;top:199px" width="18" height="18" viewBox="0 0 20 20"><rect x="3" y="3" width="5" height="5" fill="#f0f0f0"/><rect x="11" y="2" width="7" height="7" fill="#8fb4ee" stroke="#5a96f0" stroke-width=".6"/><rect x="2" y="11" width="7" height="7" fill="#8fb4ee" stroke="#5a96f0" stroke-width=".6"/><rect x="11.500" y="11.500" width="6.500" height="6.500" fill="#f0f0f0"/><path d="M18 12v6h-6z" fill="#111"/></svg>
<svg class="abs" style="left:1341px;top:221px" width="18" height="18" viewBox="0 0 20 20"><path d="M10 1l3 3.500h-2v4h4v-2l3.500 3.500-3.500 3.500v-2h-4v4h2l-3 3.500-3-3.500h2v-4h-4v2l-3.500-3.500 3.500-3.500v2h4v-4h-2z" fill="#f4f4f4"/><rect x="8" y="8" width="4" height="4" fill="#4a4a4a" stroke="#5a96f0" stroke-width="1"/></svg>
<svg class="abs" style="left:1341px;top:243px" width="18" height="18" viewBox="0 0 20 20"><path d="M10 4a6.500 6.500 0 1 1-6 4" fill="none" stroke="#f0f0f0" stroke-width="1.300"/><path d="M8 1l4.500 3-4.500 3z" fill="#5a96f0"/></svg>
<svg class="abs" style="left:1341px;top:266px" width="18" height="18" viewBox="0 0 20 20"><rect x="2.500" y="2.500" width="15" height="15" fill="#a8c4f0" stroke="#5a96f0" stroke-width="1"/><rect x="2.500" y="9.500" width="8" height="8" fill="url(#gpaper)" stroke="#ccc" stroke-width=".6"/></svg>
<svg class="abs" style="left:1341px;top:287px" width="18" height="18" viewBox="0 0 20 20"><path d="M2 2h9l5 15h-14z" fill="url(#gpaper)" stroke="#ccc" stroke-width=".5"/><path d="M11 2l5 15h2l-4-15z" fill="#a8c4f0"/><path d="M7 12h6M10.500 9.500l3 2.500-3 2.500" stroke="#111" stroke-width="1.400" fill="none"/></svg>
<svg class="abs" style="left:1341px;top:308px" width="18" height="18" viewBox="0 0 20 20"><path d="M2 11h5" stroke="#f0f0f0" stroke-width="1.200"/><path d="M9 11h9" stroke="#5a96f0" stroke-width="1" stroke-dasharray="2 1.500"/><path d="M6 17l6-14" stroke="#5a96f0" stroke-width="1.200"/></svg>
<svg class="abs" style="left:1341px;top:330px" width="18" height="18" viewBox="0 0 20 20"><path d="M2 11h5" stroke="#f0f0f0" stroke-width="1.200"/><path d="M8 11h6" stroke="#5a96f0" stroke-width="1" stroke-dasharray="2 1.500"/><path d="M13 17l6-14" stroke="#5a96f0" stroke-width="1.200"/></svg>
<svg class="abs" style="left:1341px;top:352px" width="18" height="18" viewBox="0 0 20 20"><path d="M2 6h16v9h-16z" fill="url(#gblue)" stroke="#ddd" stroke-width=".5"/><rect x="13" y="4.500" width="3" height="3" fill="#5a96f0"/></svg>
<svg class="abs" style="left:1341px;top:374px" width="18" height="18" viewBox="0 0 20 20"><path d="M2 6h16v9h-16z" fill="url(#gblue)" stroke="#ddd" stroke-width=".5"/><rect x="5" y="4.500" width="3" height="3" fill="#5a96f0"/><rect x="12" y="4.500" width="3" height="3" fill="#5a96f0"/></svg>
<svg class="abs" style="left:1341px;top:397px" width="18" height="18" viewBox="0 0 20 20"><path d="M2 10h5M13 10h5" stroke="#f0f0f0" stroke-width="1.200"/><path d="M7 7.500l6 5M13 7.500l-6 5" stroke="#5a96f0" stroke-width="1.200"/></svg>
<svg class="abs" style="left:1341px;top:418px" width="18" height="18" viewBox="0 0 20 20"><path d="M3 17v-7l7-7h7v14z" fill="url(#gpaper)" stroke="#ccc" stroke-width=".5"/><path d="M2 10l8-8" stroke="#5a96f0" stroke-width="1.500"/></svg>
<svg class="abs" style="left:1341px;top:441px" width="18" height="18" viewBox="0 0 20 20"><path d="M3 17v-5c0-5 4-9 9-9h5v14z" fill="url(#gpaper)" stroke="#ccc" stroke-width=".5"/><path d="M2 11c0-5 4-9 9-9" fill="none" stroke="#5a96f0" stroke-width="1.500"/></svg>
<svg class="abs" style="left:1341px;top:462px" width="18" height="18" viewBox="0 0 20 20"><path d="M3 12c3-6 6 6 9 0s3-4 5-6" fill="none" stroke="#5a96f0" stroke-width="1.400"/><circle cx="3" cy="12.500" r="1.800" fill="#222" stroke="#5a96f0" stroke-width=".8"/><circle cx="15" cy="10" r="1.800" fill="#222" stroke="#5a96f0" stroke-width=".8"/><path d="M17 3v3" stroke="#f0f0f0"/></svg>
<svg class="abs" style="left:1341px;top:484px" width="18" height="18" viewBox="0 0 20 20"><path d="M7 8l5-3 5 2v7l-5 3-5-2z" fill="#a8c4f0" stroke="#dde" stroke-width=".5"/><path d="M2 12l4-3v7l-4 2zM8 3l5-2 4 1-5 2z" fill="#c8daf6" stroke="#dde" stroke-width=".5"/><path d="M14 12l4-2v6l-4 2z" fill="#8aa8e0"/></svg>
<!-- VIEWPORT STUFF -->
<div class="t" style="left:32px;top:108px;font-size:12px;color:#000;letter-spacing:.2px">[−][Top][2D Wireframe]</div>
<svg class="abs" style="left:36px;top:574px" width="84" height="82" viewBox="0 0 84 82"><path d="M8.500 22v45.500M13.500 72.500h45" stroke="#111" stroke-width="1" fill="none"/><rect x="4.500" y="67.500" width="9" height="9" fill="none" stroke="#111"/><path d="M8.500 67.500v9M4.500 72.500h9" stroke="#111" stroke-width="1"/><path d="M10.500 5.500l6 7 6-7M16.500 12.500v6" stroke="#111" stroke-width="1.100" fill="none"/><path d="M63.500 58.500l12 12.500M75.500 58.500l-12 12.500" stroke="#111" stroke-width="1.100"/></svg>
<!-- viewcube -->
<div class="abs" style="left:1222px;top:119px;width:92px;height:92px;border-radius:50%;border:9px solid #fcfcfc;box-sizing:border-box"></div>
<div class="abs" style="left:1247px;top:144px;width:42px;height:42px;background:#f0f0f0;border:1px solid #c4c4c4;box-sizing:border-box"></div>
<div class="abs" style="left:1255px;top:152px;width:26px;height:26px;background:#e3e4ea"></div>
<div class="t" style="left:1259px;top:160px;font-size:10px;font-weight:bold;color:#a0a0a0;letter-spacing:-.3px">TOP</div>
<div class="t vc" style="left:1262px;top:113px">N</div>
<div class="t vc" style="left:1262px;top:201px">S</div>
<div class="t vc" style="left:1215px;top:157px">W</div>
<div class="t vc" style="left:1306px;top:157px">E</div>
<div class="abs" style="left:1243px;top:235px;width:48px;height:16px;background:#e9eaf6;border-radius:3px"></div>
<div class="t" style="left:1248px;top:237px;font-size:11.500px;color:#a2a2a2">WCS</div>
<svg class="abs" style="left:1277px;top:240px" width="9" height="6"><path d="M.5.500h8l-4 5z" fill="#f0f0f4" stroke="#b0b0b0" stroke-width=".9"/></svg>
<!-- navbar -->
<div class="abs" style="left:1297px;top:275px;width:35px;height:215px;background:#f5f5f5;border:2px solid #d2d2d2;border-radius:5px;box-sizing:border-box"></div>
<svg class="abs" style="left:1297px;top:275px" width="35" height="215" viewBox="0 0 35 215" fill="none" stroke="#dcdcdc" stroke-width="1.200"><circle cx="27" cy="7.500" r="3"/><path d="M25 5.500l4 4M29 5.500l-4 4" stroke-width=".8"/><path d="M8 33a10 10 0 0 1 10-10h10v10a10 10 0 0 1-20 0z"/><circle cx="18" cy="33" r="6"/><path d="M15 50h5l-2.500 3z" fill="#dcdcdc" stroke="none"/><path d="M5 59h25"/><path d="M12 88c-3-4-6-8-5-9s3 0 5 3v-12c0-2 3-2 3 0v-3c0-2 3-2 3 0v1c0-2 3-2 3 0v2c0-2 3-2 3 0v10c0 4-2 8-4 8z"/><path d="M7 93l10 10M17 93l-10 10M7 93h3M7 93v3M17 93h-3M17 93v3M7 103h3M7 103v-3"/><circle cx="20" cy="107" r="4"/><path d="M23 110l5 5" stroke-width="2"/><path d="M15 121h5l-2.500 3z" fill="#dcdcdc" stroke="none"/><path d="M15 147v-14h-2l3.500-4 3.500 4h-2v14z"/><ellipse cx="16.500" cy="144" rx="10" ry="4"/><path d="M15 159h5l-2.500 3z" fill="#dcdcdc" stroke="none"/><path d="M5 168h25"/><rect x="7" y="174" width="5" height="5"/><rect x="15" y="174" width="5" height="5"/><rect x="23" y="174" width="5" height="5"/><rect x="7" y="183" width="15" height="12"/><path d="M12 186v6l6-3z" fill="#dcdcdc"/><circle cx="27" cy="207" r="3"/><path d="M25 207h4" stroke-width=".8"/></svg>
<!-- COMMAND LINE -->
<div class="abs" style="left:1px;top:665px;width:53px;height:33px;background:linear-gradient(#5e5e5e,#3c3c3c)"></div>
<div class="abs" style="left:4px;top:672px;width:5px;height:18px;background:repeating-linear-gradient(0deg,#4c4c4c 0 1px,transparent 1px 2px),repeating-linear-gradient(90deg,#9a9a9a 0 1px,#4c4c4c 1px 2px,#4c4c4c 2px 3px)"></div>
<svg class="abs" style="left:15px;top:677px" width="10" height="9"><path d="M1 .5l8 8M9 .5l-8 8" stroke="#fff" stroke-width="2"/></svg>
<svg class="abs" style="left:35px;top:673px" width="15" height="15" viewBox="0 0 15 15"><path d="M5.500 5.500l7 7" stroke="#222" stroke-width="4.200" stroke-linecap="round"/><circle cx="4.500" cy="4.500" r="3.800" fill="#fafafa" stroke="#222" stroke-width=".7"/><path d="M5.500 5.500l7 7" stroke="#fafafa" stroke-width="2.800" stroke-linecap="round"/><path d="M4.500 4.500l-4-4h4z" fill="#4c4c4c" stroke="none"/><path d="M4.200 4.800v-3.500l-3 0 0 3z" fill="#4e4e4e"/></svg>
<div class="abs" style="left:60px;top:674px;width:14px;height:14px;background:#e9eaf0;border:1px solid #9a9aa6;box-sizing:border-box;border-radius:1px"></div>
<svg class="abs" style="left:62px;top:677px" width="10" height="8"><path d="M1 1l3 3-3 3M5.500 7.500h3.500" stroke="#333" stroke-width="1.200" fill="none"/></svg>
<svg class="abs" style="left:77px;top:679px;fill:#8a8a8a" width="6" height="3"><use href="#i-dd" width="6" height="3"/></svg>
<div class="t" style="left:85px;top:675px;font-size:12px;color:#000;transform:scaleX(.865);transform-origin:0 0">SHNEK</div>
<!-- LAYOUT TABS -->
<svg class="abs" style="left:10px;top:698px" width="222" height="20" viewBox="0 0 222 20"><defs><linearGradient id="gtab" x1="0" y1="0" x2="0" y2="1"><stop offset="0" stop-color="#5a5a5a"/><stop offset="1" stop-color="#7a7a7a"/></linearGradient></defs>
<path d="M1 0c4 3 4 14 9 18h41c5-3 5-15 9-18z" fill="url(#gtab)" stroke="#2e2e2e" stroke-width=".8"/>
<path d="M60 1c3 3 4 13 9 17h46c5-3 5-13 9-17" fill="#505050" stroke="#666" stroke-width=".9"/>
<path d="M125 1c3 3 4 13 9 17h47c5-3 5-13 9-17" fill="#505050" stroke="#666" stroke-width=".9"/>
<path d="M194 18c4-3 4-13 8-16h15c-2 3-3 13-7 16z" fill="#505050" stroke="#666" stroke-width=".9"/>
<path d="M205 5.500v9M200.500 10h9" stroke="#e0e0e0" stroke-width="1.800"/></svg>
<div class="t" style="left:23px;top:702px;font-size:12.500px;font-weight:bold;color:#fff;letter-spacing:-.35px">Model</div>
<div class="t" style="left:81px;top:702px;font-size:12.500px;color:#cfcfcf;letter-spacing:-.3px">Layout1</div>
<div class="t" style="left:146px;top:702px;font-size:12.500px;color:#cfcfcf;letter-spacing:-.3px">Layout2</div>
<!-- STATUS TRAY -->
<div class="abs" style="left:800px;top:698px;width:566px;height:29px;background:#4e4e4e"></div>
<div class="sg" style="left:802px;width:47px"></div>
<div class="sg" style="left:852px;width:63px"></div>
<div class="sg" style="left:918px;width:102px"></div>
<div class="sg" style="left:1022px;width:63px"></div>
<div class="sg" style="left:1087px;width:106px"></div>
<div class="sg" style="left:1195px;width:38px"></div>
<div class="sg" style="left:1234px;width:27px"></div>
<div class="sg" style="left:1262px;width:25px"></div>
<div class="sg" style="left:1289px;width:26px"></div>
<div class="sg" style="left:1316px;width:25px"></div>
<div class="sg" style="left:1342px;width:24px;border-right:none"></div>
<div class="t" style="left:806px;top:707px;font-size:12px;color:#fff;transform:scaleX(.92);transform-origin:0 0">MODEL</div>
<svg class="abs" style="left:857px;top:705px" width="14" height="15" viewBox="0 0 14 15"><path d="M1 0v15M4 0v15M7 0v15M10 0v15M13 0v15" stroke="#d4d4d4" stroke-width=".9" stroke-dasharray="2.200 .6"/></svg>
<svg class="abs" style="left:880px;top:705px" width="15" height="15" viewBox="0 0 15 15" fill="#d0d0d0"><rect x="0.0" y="0.0" width="1" height="1"/><rect x="0.0" y="2.6" width="1" height="1"/><rect x="0.0" y="5.2" width="1" height="1"/><rect x="0.0" y="7.8" width="1" height="1"/><rect x="0.0" y="10.4" width="1" height="1"/><rect x="0.0" y="13.0" width="1" height="1"/><rect x="2.6" y="0.0" width="1" height="1"/><rect x="2.6" y="2.6" width="1" height="1"/><rect x="2.6" y="5.2" width="1" height="1"/><rect x="2.6" y="7.8" width="1" height="1"/><rect x="2.6" y="10.4" width="1" height="1"/><rect x="2.6" y="13.0" width="1" height="1"/><rect x="5.2" y="0.0" width="1" height="1"/><rect x="5.2" y="2.6" width="1" height="1"/><rect x="5.2" y="5.2" width="1" height="1"/><rect x="5.2" y="7.8" width="1" height="1"/><rect x="5.2" y="10.4" width="1" height="1"/><rect x="5.2" y="13.0" width="1" height="1"/><rect x="7.8" y="0.0" width="1" height="1"/><rect x="7.8" y="2.6" width="1" height="1"/><rect x="7.8" y="5.2" width="1" height="1"/><rect x="7.8" y="7.8" width="1" height="1"/><rect x="7.8" y="10.4" width="1" height="1"/><rect x="7.8" y="13.0" width="1" height="1"/><rect x="10.4" y="0.0" width="1" height="1"/><rect x="10.4" y="2.6" width="1" height="1"/><rect x="10.4" y="5.2" width="1" height="1"/><rect x="10.4" y="7.8" width="1" height="1"/><rect x="10.4" y="10.4" width="1" height="1"/><rect x="10.4" y="13.0" width="1" height="1"/><rect x="13.0" y="0.0" width="1" height="1"/><rect x="13.0" y="2.6" width="1" height="1"/><rect x="13.0" y="5.2" width="1" height="1"/><rect x="13.0" y="7.8" width="1" height="1"/><rect x="13.0" y="10.4" width="1" height="1"/><rect x="13.0" y="13.0" width="1" height="1"/></svg>
<svg class="abs" style="left:904px;top:710px;fill:#fff" width="7" height="4"><use href="#i-dd" width="7" height="4"/></svg>
<svg class="abs" style="left:922px;top:704px" width="14" height="16" viewBox="0 0 14 16"><path d="M2.500 1v13.500h11M2.500 9.500h5v5" fill="none" stroke="#d0d0d0" stroke-width="1.200"/></svg>
<svg class="abs" style="left:945px;top:704px" width="18" height="17" viewBox="0 0 18 17"><circle cx="8" cy="8.500" r="6.500" fill="none" stroke="#d0d0d0" stroke-width="1.300"/><path d="M8 8.500h9M8 8.500l5-6" stroke="#d0d0d0" stroke-width="1.100"/></svg>
<svg class="abs" style="left:971px;top:710px;fill:#fff" width="7" height="4"><use href="#i-dd" width="7" height="4"/></svg>
<svg class="abs" style="left:985px;top:703px" width="17" height="19" viewBox="0 0 17 19"><path d="M1 1l15 17" stroke="#c8c8c8" stroke-width="1.300"/><path d="M8.500 2v15M16 3l-15 10" stroke="#8a8a8a" stroke-width="1"/></svg>
<svg class="abs" style="left:1009px;top:710px;fill:#fff" width="7" height="4"><use href="#i-dd" width="7" height="4"/></svg>
<svg class="abs" style="left:1024px;top:704px" width="18" height="17" viewBox="0 0 18 17"><path d="M1 15.500h16" stroke="#2f8cf0" stroke-width="1.500"/><path d="M2 15l12-13" stroke="#2f8cf0" stroke-width="1.800"/></svg>
<svg class="abs" style="left:1049px;top:703px" width="17" height="18" viewBox="0 0 17 18"><rect x="3.500" y="4.500" width="12" height="12" fill="none" stroke="#2f8cf0" stroke-width="1.500"/><rect x="1" y="2" width="5" height="5" fill="#111"/><rect x="2.200" y="3.200" width="2.600" height="2.600" fill="#2fd04a"/></svg>
<svg class="abs" style="left:1073px;top:710px;fill:#fff" width="7" height="4"><use href="#i-dd" width="7" height="4"/></svg>
<svg class="abs" style="left:1089px;top:702px" width="20" height="20" viewBox="0 0 20 20"><path d="M10 2l2.500 9 6 7-7-4.500-1.500 5-1.500-5-7 4.500 6-7z" fill="#2f8cf0"/><circle cx="14.500" cy="6" r="2.800" fill="#4e4e4e" stroke="#2f8cf0" stroke-width="1.400"/></svg>
<svg class="abs" style="left:1113px;top:702px" width="20" height="20" viewBox="0 0 20 20"><path d="M10 2l2.500 9 6 7-7-4.500-1.500 5-1.500-5-7 4.500 6-7z" fill="#c8c8c8"/><path d="M14 3l3 2-3 2M17 5h-5" stroke="#c8c8c8" stroke-width="1" fill="none"/></svg>
<svg class="abs" style="left:1137px;top:702px" width="19" height="20" viewBox="0 0 19 20"><path d="M9.500 2l2.500 9 6 7-7-4.500-1.500 5-1.500-5-7 4.500 6-7z" fill="#c8c8c8"/></svg>
<div class="t" style="left:1164px;top:707px;font-size:12px;color:#fff;letter-spacing:-.6px">1:1</div>
<svg class="abs" style="left:1182px;top:710px;fill:#fff" width="7" height="4"><use href="#i-dd" width="7" height="4"/></svg>
<svg class="abs" style="left:1200px;top:705px;opacity:.68" width="14" height="14"><use href="#i-gear" width="14" height="14"/></svg>
<svg class="abs" style="left:1223px;top:710px;fill:#fff" width="7" height="4"><use href="#i-dd" width="7" height="4"/></svg>
<svg class="abs" style="left:1240px;top:705px" width="15" height="15"><path d="M7.500 0v15M0 7.500h15" stroke="#e8e8e8" stroke-width="1.600"/></svg>
<svg class="abs" style="left:1265px;top:703px" width="18" height="18" viewBox="0 0 18 18"><rect x="1.500" y="1.500" width="6" height="6" fill="none" stroke="#d0d0d0" stroke-width="1.200"/><circle cx="13" cy="6" r="3" fill="none" stroke="#d0d0d0" stroke-width="1.200"/><path d="M8 10l4 6.500h-8z" fill="none" stroke="#d0d0d0" stroke-width="1.200"/></svg>
<svg class="abs" style="left:1292px;top:703px" width="20" height="20" viewBox="0 0 20 20"><circle cx="10" cy="10" r="9" fill="#1f7ae0" stroke="#0d3f8a" stroke-width="1"/><path d="M6 13.500l8-7" stroke="#0d3f8a" stroke-width="1.300"/><circle cx="6.500" cy="13" r="1.200" fill="#0d3f8a"/></svg>
<svg class="abs" style="left:1320px;top:705px" width="17" height="15" viewBox="0 0 17 15"><rect x=".5" y=".5" width="16" height="14" fill="none" stroke="#e0e0e0" stroke-width="1"/><path d="M3.500 11.500l4-4M3.500 11.500v-3.500M3.500 11.500h3.500M13.500 3.500l-4 4M13.500 3.500v3.500M13.500 3.500h-3.500" stroke="#e0e0e0" stroke-width="1.300" fill="none"/></svg>
<svg class="abs" style="left:1346px;top:706px" width="15" height="13"><path d="M0 1.500h15M0 6.500h15M0 11.500h15" stroke="#e0e0e0" stroke-width="1.700"/></svg>
<!-- TASKBAR ICONS -->
<svg class="abs" style="left:16px;top:740px" width="17" height="17" viewBox="0 0 17 17"><path d="M0 2.300l7-1v6.700h-7zM8 1.200l9-1.200v8h-9zM0 9h7v6.700l-7-1zM8 9h9v8l-9-1.200z" fill="#fff"/></svg>
<svg class="abs" style="left:63px;top:739px" width="18" height="18" viewBox="0 0 18 18"><path d="M2 1.500v3M2 13.500v3M13 1.500v3M13 13.500v3" stroke="#fff" stroke-width="1.200"/><rect x="1.500" y="5.500" width="12" height="7" fill="none" stroke="#fff" stroke-width="1.200"/><path d="M16.500 3v3M16.500 8v6" stroke="#fff" stroke-width="1.400"/><path d="M2 1.500h11M2 16.500h11" stroke="#fff" stroke-width="1.200"/></svg>
<!-- skype -->
<svg class="abs" style="left:111px;top:736px" width="24" height="24" viewBox="0 0 24 24"><circle cx="7.500" cy="7.500" r="6" fill="#19b0ee"/><circle cx="16.500" cy="16.500" r="6" fill="#1593e0"/><circle cx="12" cy="12" r="9.500" fill="#18a8ea"/><text x="12" y="17.500" font-family="Liberation Sans" font-weight="bold" font-size="15" fill="#fff" text-anchor="middle">S</text></svg>
<!-- edge -->
<svg class="abs" style="left:160px;top:735px" width="25" height="25" viewBox="0 0 25 25"><defs><linearGradient id="ge1" x1="0" y1="0" x2="1" y2="0"><stop offset="0" stop-color="#2a8fe0"/><stop offset=".6" stop-color="#39c4c0"/><stop offset="1" stop-color="#7be03a"/></linearGradient></defs><circle cx="12.500" cy="12.500" r="12" fill="#1667c0"/><path d="M.8 11c1-6 6-10.500 12-10.500 7 0 11.700 5 11.700 10 0 4-3 6-6.500 6-3 0-4-1.500-3.500-3 .5-1 .8-1.800.3-3.300-.8-2-3-3.200-5.500-3.200-4 0-7.500 2-8.500 4z" fill="url(#ge1)"/><path d="M8 12c-2 3-1 8 3.500 11 3 1.300 7 0 9.500-3-3 1.500-6.500 1-8.500-1-2-2-2.500-4.500-1.500-6.500z" fill="#0c4a9a"/></svg>
<!-- chrome -->
<svg class="abs" style="left:209px;top:735px" width="25" height="25" viewBox="0 0 25 25"><circle cx="12.500" cy="12.500" r="12" fill="#fff"/><path d="M12.500.5a12 12 0 0 1 10.400 6h-10.400a6 6 0 0 0-5.600 3.800l-4.200-6.500a12 12 0 0 1 9.800-3.300z" fill="#e33b2e"/><path d="M22.900 6.500a12 12 0 0 1-10.900 18l5.700-9a6 6 0 0 0 .1-6.500z" fill="#f7c32e"/><path d="M2.500 4a12 12 0 0 0 9.500 20.500l4-6.500a6 6 0 0 1-8.700-2.500z" fill="#2da94f"/><circle cx="12.500" cy="12.500" r="5.500" fill="#fff"/><circle cx="12.500" cy="12.500" r="4.300" fill="#4285f4"/></svg>
<!-- yandex -->
<svg class="abs" style="left:258px;top:735px" width="25" height="25" viewBox="0 0 25 25"><circle cx="12.500" cy="12.500" r="12" fill="#f4f4f4"/><path d="M6.500 5.500l6 8.500v7M18.500 5.500l-6 8.500" fill="none" stroke="#e8202a" stroke-width="2.800" stroke-linecap="round"/></svg>
<!-- explorer -->
<svg class="abs" style="left:307px;top:736px" width="24" height="23" viewBox="0 0 24 23"><path d="M1 2h8l2 2.500h12v15.500h-22z" fill="#f5b73a"/><path d="M1 6.500h22v13.500h-22z" fill="#fbd868"/><path d="M5 22v-9h14v9h-4v-5h-6v5z" fill="#3a8fe0"/></svg>
<!-- scm -->
<svg class="abs" style="left:357px;top:736px" width="24" height="24" viewBox="0 0 24 24"><circle cx="12" cy="12" r="7.500" fill="none" stroke="#5a7a96" stroke-width="3.500"/><text x="12" y="16" font-family="Liberation Sans" font-weight="bold" font-size="10" fill="#0c141a" text-anchor="middle">SCM</text></svg>
<!-- notepad -->
<svg class="abs" style="left:404px;top:735px" width="24" height="25" viewBox="0 0 24 25"><path d="M7 2h14l-4 20h-14z" fill="#dff0fa" stroke="#8ab" stroke-width=".6"/><path d="M7 2h14l-.6 3h-14z" fill="#9fd0ee"/><path d="M18 22l3-20 1.500 1-3 20z" fill="#b8c4cc"/><path d="M6.500 8h11M6 11h11M5.500 14h11M5 17h11" stroke="#b0c8d8" stroke-width=".8"/></svg>
<!-- paint -->
<svg class="abs" style="left:453px;top:734px" width="26" height="26" viewBox="0 0 26 26"><path d="M12 6c-7 0-11 5-11 10s5 8 9 7c2-.5 1-3 3-4s6 1 8-4-3-9-9-9z" fill="#e8edf4" stroke="#8a9ab0" stroke-width=".6"/><circle cx="6" cy="13" r="1.800" fill="#e23a3a"/><circle cx="10" cy="10" r="1.800" fill="#f0c020"/><circle cx="6.500" cy="18" r="1.800" fill="#3a9a3a"/><circle cx="15" cy="10" r="1.800" fill="#3a6ae0"/><path d="M24 1l-7 12-2.500 6 4.500-5 6-12z" fill="#e8a040" stroke="#8a5a20" stroke-width=".5"/><path d="M14.500 19l2.500-6 2 1z" fill="#8a4a1a"/></svg>
<!-- calc -->
<svg class="abs" style="left:506px;top:736px" width="18" height="23" viewBox="0 0 18 23"><rect x=".5" y=".5" width="17" height="22" rx="1.500" fill="#6a7684" stroke="#4a5560"/><rect x="2.500" y="2.500" width="13" height="4.500" fill="#5ac8f4"/><path d="M2.500 9.500h3v3h-3zM7.500 9.500h3v3h-3zM12.500 9.500h3v3h-3zM2.500 13.700h3v3h-3zM7.500 13.700h3v3h-3zM2.500 17.900h3v3h-3zM7.500 17.900h3v3h-3z" fill="#eef2f6"/><rect x="12.500" y="13.700" width="3" height="7.200" fill="#1a5aa8"/></svg>
<!-- autocad active -->
<div class="abs" style="left:540px;top:727px;width:44px;height:41px;background:#455a64"></div>
<div class="abs" style="left:552px;top:736px;width:24px;height:24px;background:#f6e4e2"></div>
<svg class="abs" style="left:554px;top:738px" width="20" height="20" viewBox="0 0 26 28"><path d="M1 27L10.500 1h5.500l9.500 26h-5.500l-2.200-6.500h-8.500L7 27zM10.500 16h6l-3.200-9.500z" fill="#c8202c" fill-rule="evenodd"/></svg>
<div class="abs" style="left:585px;top:729px;width:1px;height:39px;background:#3d525c"></div>
<!-- infinity -->
<svg class="abs" style="left:600px;top:739px" width="25" height="17" viewBox="0 0 25 17"><defs><linearGradient id="ginf" x1="0" y1="0" x2="1" y2="0"><stop offset="0" stop-color="#3aa0f0"/><stop offset="1" stop-color="#8a4ae0"/></linearGradient></defs><path d="M12.500 8.500c-2-3-4-5-7-5s-4.500 2.500-4.500 5 1.500 5 4.500 5 5-2 7-5 4-5 7-5 4.500 2.500 4.500 5-1.500 5-4.500 5-5-2-7-5z" fill="none" stroke="url(#ginf)" stroke-width="3.200"/></svg>
<!-- VS -->
<svg class="abs" style="left:650px;top:735px" width="25" height="25" viewBox="0 0 25 25"><path d="M18 1l6 3v17l-6 3-11-10-4 3.500-2.500-1.200v-7.600l2.500-1.200 4 3.500zM18 8l-6 4.500 6 4.500zM2.500 10v5l2.800-2.500z" fill="#8a5fd0" fill-rule="evenodd"/><path d="M18 1l6 3v17l-6 3z" fill="#b48af0"/></svg>
<!-- acrobat -->
<svg class="abs" style="left:700px;top:736px" width="23" height="23" viewBox="0 0 23 23"><rect x=".5" y=".5" width="22" height="22" rx="3.500" fill="#b30b00"/><path d="M5 17c1-2 4-3.500 6-4 2-.5 5-.8 6.500 0s.5 2-1 1.500c-2-.5-5-3-6-5.500s-1-4.500 0-4.500 1 2 .5 4-2.500 6.500-4 8-2.500 1.500-2 .5z" fill="none" stroke="#fff" stroke-width="1.300"/></svg>
<!-- underlines -->
<div class="ul" style="left:152px"></div><div class="ul" style="left:201px"></div><div class="ul" style="left:299px"></div><div class="ul" style="left:397px"></div><div class="ul" style="left:446px"></div><div class="ul" style="left:540px;width:44px"></div><div class="ul" style="left:691px"></div>
<!-- tray -->
<svg class="abs" style="left:926px;top:735px" width="28" height="26" viewBox="0 0 28 26"><circle cx="15" cy="13" r="8" fill="#f6a81c"/><circle cx="10" cy="10" r="6.500" fill="#1f3641"/><path d="M4 10a4 4 0 0 1 7.500-2 3.200 3.200 0 0 1 3.500 3.200c0 1.500-1 2.300-2.500 2.300h-8c-1.800 0-2.800-1-2.800-2.300s1-2 2.300-1.200z" fill="#e8eef8" stroke="#b8c4d8" stroke-width=".4"/><path d="M15 19a3.200 3.200 0 0 1 6-1.500 2.600 2.600 0 0 1 3 2.500c0 1.200-1 2-2.200 2h-6.500c-1.500 0-2.300-.8-2.300-1.800s.8-1.700 2-1.200z" fill="#dfe6f4" stroke="#a8b4c8" stroke-width=".4"/></svg>
<div class="t" style="left:959px;top:741px;font-size:14.500px;color:#fff;letter-spacing:-.3px;white-space:pre">63°F  Partly cloudy</div>
<svg class="abs" style="left:1098px;top:743px" width="14" height="9"><path d="M1 8l6-6.500 6 6.500" fill="none" stroke="#fff" stroke-width="1.400"/></svg>
<svg class="abs" style="left:1123px;top:738px" width="14" height="20" viewBox="0 0 14 20"><rect x="1" y="5" width="8" height="10" rx="1.500" fill="none" stroke="#fff" stroke-width="1.100"/><circle cx="5" cy="9" r="1.600" fill="none" stroke="#fff" stroke-width="1"/><path d="M9 8l3.500-1.500v7l-3.500-1.500M2 3c1.500-2 4.500-2 6 0M2 17c1.500 2 4.500 2 6 0" fill="none" stroke="#fff" stroke-width="1"/></svg>
<svg class="abs" style="left:1144px;top:741px" width="18" height="14" viewBox="0 0 18 14"><rect x="6.500" y="3.500" width="10" height="7" fill="none" stroke="#fff" stroke-width="1"/><path d="M9.500 5l4 4M13.500 5l-4 4" stroke="#fff" stroke-width="1"/><path d="M3 0v3M5.500 0v3M1.500 3h5.500v3c0 1.500-1 2.500-2 2.500v5M4 8.500c-1.500 0-2.500-1-2.500-2.500v-3" fill="none" stroke="#fff" stroke-width="1"/></svg>
<svg class="abs" style="left:1168px;top:740px" width="18" height="16" viewBox="0 0 18 16"><rect x="3.500" y=".5" width="14" height="10" fill="none" stroke="#fff" stroke-width="1"/><path d="M10.500 10.500v3.500M7 14.500h8" stroke="#fff" stroke-width="1"/><rect x=".5" y="6.500" width="4" height="9" fill="#1f3641" stroke="#fff" stroke-width="1"/></svg>
<svg class="abs" style="left:1192px;top:740px" width="19" height="16" viewBox="0 0 19 16"><path d="M1 5.500h3l4-4v13l-4-4h-3z" fill="none" stroke="#fff" stroke-width="1.100"/><path d="M10.500 5.500c1.200 1.200 1.200 3.800 0 5M12.800 3.500c2.300 2.300 2.300 6.700 0 9M15 1.500c3.300 3.300 3.300 9.700 0 13" fill="none" stroke="#fff" stroke-width="1"/></svg>
<div class="t" style="left:1220px;top:742px;font-size:12px;color:#fff;transform:scaleX(.86);transform-origin:0 0">ENG</div>
<div class="t" style="left:1260px;top:733px;font-size:12px;color:#fff;letter-spacing:-.25px">8:39 PM</div>
<div class="t" style="left:1256px;top:752px;font-size:12px;color:#fff;letter-spacing:-.3px">10/2/2023</div>
<svg class="abs" style="left:1325px;top:738px" width="18" height="17" viewBox="0 0 18 17"><path d="M1 1h16v11h-11l-3 4v-4h-2z" fill="#fff"/><path d="M4 4.500h10M4 7h10M4 9.500h7" stroke="#1f3641" stroke-width="1"/></svg>
<div class="abs" style="left:1333px;top:748px;width:14px;height:14px;border-radius:50%;background:#1f3641;border:1px solid #c8c8c8;box-sizing:border-box"></div>
<div class="t" style="left:1337px;top:750px;font-size:10.500px;color:#fff">6</div>
<div class="abs" style="left:1362px;top:730px;width:1px;height:38px;background:#8a979e"></div>
<!-- DIALOG -->
<div class="abs" id="dlg">
<div class="abs" id="dlgtitle"></div>
<!-- dialog icon -->
<svg class="abs" style="left:8px;top:6px" width="16" height="16" viewBox="0 0 16 16"><rect width="16" height="16" fill="#0a8a8a"/><rect x="6.500" y="1" width="3" height="14" fill="#e8e8e8" stroke="#444" stroke-width=".5"/><path d="M2 4h4M2 8h4M10 4h4M10 11h4M2 11h4" stroke="#d8b020" stroke-width="1.500"/><path d="M3 6h3M10 7h3" stroke="#224" stroke-width="1"/></svg>
<div class="t" style="left:38.5px;top:9px;font-size:12px;color:#000;transform:scaleX(1.000);transform-origin:0 0">Command:</div><div class="t" style="left:101.0px;top:9px;font-size:12px;color:#000;transform:scaleX(0.900);transform-origin:0 0">SHNEK</div>
<div class="t" style="left:216.3px;top:9px;font-size:12px;color:#000;transform:scaleX(0.871);transform-origin:0 0">COIL</div><div class="t" style="left:248.6px;top:9px;font-size:12px;color:#000;transform:scaleX(0.846);transform-origin:0 0">OF</div><div class="t" style="left:269.5px;top:9px;font-size:12px;color:#000;transform:scaleX(0.923);transform-origin:0 0">(CONICAL</div><div class="t" style="left:330.3px;top:9px;font-size:12px;color:#000;transform:scaleX(0.947);transform-origin:0 0">AND</div><div class="t" style="left:361.8px;top:9px;font-size:12px;color:#000;transform:scaleX(0.887);transform-origin:0 0">CYLINDRICAL</div><div class="t" style="left:436.8px;top:9px;font-size:12px;color:#000;transform:scaleX(0.900);transform-origin:0 0">)</div><div class="t" style="left:447.4px;top:9px;font-size:12px;color:#000;transform:scaleX(0.853);transform-origin:0 0">AUGER</div>
<svg class="abs" style="left:1044px;top:9px" width="11" height="11"><path d="M.5.500l10 10M10.500.500l-10 10" stroke="#111" stroke-width="1.100"/></svg>
<div class="abs" id="dlgpic"><svg class="abs" style="left:0;top:0" width="627" height="424" viewBox="0 0 627 424" fill="none" font-family="Liberation Sans">
<path d="M152.6 80.0 L152.8 80.6 L152.9 81.2 L153.0 81.8 L153.1 82.4 L153.2 83.0 L153.2 83.6 L153.3 84.2 L153.3 84.7 L153.3 85.3 L153.3 85.9 L153.3 86.5 L153.3 87.1 L153.2 87.7 L153.1 88.3 L153.0 88.9 L152.9 89.5 L152.8 90.1 L152.7 90.7 L152.5 91.3 L152.3 91.9 L152.2 92.5 L151.9 93.1 L151.7 93.7 L151.5 94.2 L151.2 94.8 L150.9 95.4 L150.6 96.0 L150.3 96.6 L150.0 97.2 L149.7 97.8 L149.3 98.4 L148.9 99.0 L148.5 99.6 L148.1 100.2 L147.7 100.8 L147.2 101.4 L146.8 102.0 L146.3 102.6 L145.8 103.2 L145.3 103.7 L144.7 104.3 L144.2 104.9 L143.6 105.5 L143.0 106.1 L142.5 106.7 L141.8 107.3 L141.2 107.9 L140.6 108.5 L139.9 109.1 L139.2 109.7 L138.5 110.3 L137.8 110.9 L137.1 111.5 L136.4 112.1 L135.6 112.7 L134.9 113.2 L134.1 113.8 L133.3 114.4 L132.5 115.0 L131.6 115.6 L130.8 116.2 L130.0 116.8 L129.1 117.4 L128.2 118.0 L127.3 118.6 L126.4 119.2 L125.5 119.8 L124.6 120.4 L123.6 121.0 L122.7 121.6 L121.7 122.2 L120.7 122.7 L119.7 123.3 L118.7 123.9 L117.7 124.5 L116.7 125.1 L115.7 125.7 L114.6 126.3 L113.6 126.9 L112.5 127.5" stroke="#000" stroke-width="1" shape-rendering="crispEdges"/>
<path d="M78.0 145.1 L75.6 146.3 L73.3 147.4 L71.0 148.6 L68.6 149.7 L66.3 150.9 L64.0 152.0 L61.7 153.2 L59.4 154.3 L57.1 155.5 L54.9 156.6 L52.7 157.8 L50.5 158.9 L48.4 160.1 L46.2 161.2 L44.2 162.4 L42.1 163.5 L40.1 164.7 L38.1 165.8 L36.2 167.0 L34.4 168.1 L32.6 169.3 L30.8 170.4 L29.1 171.6 L27.4 172.7 L25.8 173.9 L24.3 175.0 L22.8 176.2 L21.4 177.3 L20.1 178.5 L18.9 179.6 L17.7 180.8 L16.5 181.9 L15.5 183.1 L14.5 184.3 L13.6 185.4 L12.8 186.6 L12.1 187.7 L11.5 188.9 L10.9 190.0 L10.4 191.2 L10.0 192.3 L9.7 193.5 L9.5 194.6 L9.4 195.8 L9.3 196.9 L9.4 198.1 L9.5 199.2 L9.8 200.4 L10.1 201.5 L10.5 202.7 L11.0 203.8 L11.6 205.0 L12.3 206.1 L13.1 207.3 L13.9 208.4 L14.9 209.6 L15.9 210.7 L17.1 211.9 L18.3 213.0 L19.6 214.2 L21.0 215.3 L22.5 216.5 L24.1 217.6 L25.7 218.8 L27.5 219.9 L29.3 221.1 L31.2 222.2 L33.2 223.4 L35.3 224.6 L37.4 225.7 L39.6 226.9 L41.9 228.0 L44.2 229.2 L46.7 230.3 L49.1 231.5 L51.7 232.6 L54.3 233.8 L57.0 234.9 L59.7 236.1 L62.4 237.2 L65.3 238.4 L68.1 239.5 L71.1 240.7 L74.0 241.8 L77.0 243.0 L80.1 244.1 L83.1 245.3 L86.2 246.4 L89.4 247.6 L92.5 248.7 L95.7 249.9 L98.9 251.0 L102.1 252.2 L105.3 253.3 L108.5 254.5 L111.7 255.6 L115.0 256.8 L118.2 257.9 L121.4 259.1 L124.6 260.2 L127.8 261.4 L131.0 262.5 L134.2 263.7 L137.3 264.8 L140.4 266.0 L143.5 267.2 L146.6 268.3 L149.6 269.5 L152.6 270.6 L155.5 271.8 L158.4 272.9 L161.2 274.1 L164.0 275.2 L166.7 276.4 L169.4 277.5 L172.0 278.7 L174.6 279.8 L177.0 281.0 L179.4 282.1 L181.7 283.3 L184.0 284.4 L186.2 285.6 L188.2 286.7 L190.2 287.9 L192.1 289.0 L194.0 290.2 L195.7 291.3 L197.3 292.5 L198.9 293.6 L200.3 294.8 L201.6 295.9 L202.8 297.1 L204.0 298.2 L205.0 299.4 L205.9 300.5 L206.7 301.7 L207.4 302.8 L207.9 304.0 L208.4 305.1 L208.8 306.3" stroke="#000" stroke-width="1" shape-rendering="crispEdges"/>
<path d="M78.0 193.1 L78.0 195.0 L78.1 196.9 L78.2 198.8 L78.4 200.7 L78.6 202.6 L78.8 204.5 L79.1 206.4 L79.5 208.2 L79.9 210.1 L80.3 212.0 L80.8 213.9 L81.3 215.8 L81.8 217.7 L82.4 219.6 L83.1 221.4 L83.7 223.3 L84.4 225.2 L85.1 227.1 L85.9 229.0 L86.6 230.9 L87.4 232.8 L88.2 234.6 L89.1 236.5 L89.9 238.4 L90.8 240.3 L91.7 242.2 L92.6 244.1 L93.4 246.0 L94.3 247.8 L95.2 249.7 L96.2 251.6 L97.1 253.5 L97.9 255.4 L98.8 257.3 L99.7 259.2 L100.6 261.0 L101.4 262.9 L102.3 264.8 L103.1 266.7 L103.9 268.6 L104.6 270.5 L105.4 272.4 L106.1 274.2 L106.8 276.1 L107.4 278.0 L108.1 279.9 L108.7 281.8 L109.2 283.7 L109.7 285.6 L110.2 287.4 L110.6 289.3 L111.0 291.2 L111.4 293.1 L111.7 295.0 L111.9 296.9 L112.1 298.8 L112.3 300.6 L112.4 302.5 L112.5 304.4 L112.5 306.3" stroke="#000" stroke-width="1" shape-rendering="crispEdges"/>
<rect x="78" y="80" width="34.5" height="226.3" stroke="#000" stroke-width="2"/>
<path d="M112.5 80.0 L152.0 80.0 M112.5 306.3 L208.5 306.3" stroke="#000" stroke-width="1" shape-rendering="crispEdges"/>
<path d="M63.0 31.5 L151.5 31.5 M151.5 26.5 L151.5 80.0 M78.5 58.0 L78.5 79.0 M112.5 58.0 L112.5 79.0 M78.5 63.5 L112.5 63.5 M155.0 80.5 L237.0 80.5 M233.5 80.5 L233.5 306.0 M211.0 306.5 L237.0 306.5 M207.5 307.0 L207.5 362.0 M65.0 357.5 L207.5 357.5 M554.5 164.5 L583.0 164.5 M554.5 170.5 L583.0 170.5 M578.5 146.0 L578.5 187.5" stroke="#0000ff" stroke-width="1" shape-rendering="crispEdges"/>
<path d="M150.5 31.5 L142.0 30.0 L142.0 33.5 Z M206.5 357.5 L198.0 356.0 L198.0 359.5 Z M80.0 63.5 L86.0 62.0 L86.0 65.5 Z M111.0 63.5 L105.0 62.0 L105.0 65.5 Z M232.3 84.0 L235.3 84.0 L235.3 90.0 L232.3 90.0 Z M232.3 296.0 L235.3 296.0 L235.3 302.0 L232.3 302.0 Z M577.3 157.0 L580.0 157.0 L580.0 163.0 L577.3 163.0 Z M577.3 172.0 L580.0 172.0 L580.0 178.0 L577.3 178.0 Z" fill="#0000ff" stroke="#0000ff" stroke-width=".4"/>
<path d="M515.8 164.3 L553.1 164.3 M515.1 154.6 L554.1 148.1 M513.1 145.0 L551.6 131.1 M508.6 135.6 L546.3 114.1 M503.3 127.4 L538.5 97.5 M496.3 120.6 L525.2 82.9 M488.1 115.1 L510.0 69.8 M478.9 111.6 L493.0 60.4 M469.2 109.6 L473.9 54.6 M459.4 109.6 L452.4 52.6 M449.6 111.2 L431.1 54.2 M440.3 115.1 L410.4 60.8 M432.4 120.6 L390.1 72.1 M425.0 127.4 L372.3 87.2 M419.8 135.6 L357.2 105.9 M415.8 144.4 L347.1 127.4 M414.3 154.6 L340.8 151.2 M414.3 164.2 L339.3 176.9 M416.2 174.0 L344.0 202.3 M420.3 182.4 L354.3 226.7 M426.6 190.8 L369.0 249.4 M433.8 197.4 L388.9 268.3 M442.2 202.1 L411.9 283.0 M451.6 204.8 L439.9 292.3" stroke="#ff0000" stroke-width="1" shape-rendering="crispEdges"/>
<path d="M552.6 170.4 L553.1 164.3 L554.1 148.1 L551.6 131.1 L546.3 114.1 L538.5 97.5 L525.2 82.9 L510.0 69.8 L493.0 60.4 L473.9 54.6 L452.4 52.6 L431.1 54.2 L410.4 60.8 L390.1 72.1 L372.3 87.2 L357.2 105.9 L347.1 127.4 L340.8 151.2 L339.3 176.9 L344.0 202.3 L354.3 226.7 L369.0 249.4 L388.9 268.3 L411.9 283.0 L439.9 292.3 L468.6 296.2 L461.4 205.4 L451.6 204.8 L442.2 202.1 L433.8 197.4 L426.6 190.8 L420.3 182.4 L416.2 174.0 L414.3 164.2 L414.3 154.6 L415.8 144.4 L419.8 135.6 L425.0 127.4 L432.4 120.6 L440.3 115.1 L449.6 111.2 L459.4 109.6 L469.2 109.6 L478.9 111.6 L488.1 115.1 L496.3 120.6 L503.3 127.4 L508.6 135.6 L513.1 145.0 L515.1 154.6 L515.8 164.3 L516.5 170.4 L552.6 170.4" stroke="#000" stroke-width="1" stroke-linejoin="round" shape-rendering="crispEdges"/>
<ellipse cx="451.20000000000005" cy="17.5" rx="8.8" ry="8.2" stroke="#000" stroke-width="1" shape-rendering="crispEdges"/>
<path d="M454.0 25.5 L486.5 25.5 M479.0 23.3 L486.5 25.5 L479.0 27.7" stroke="#000" stroke-width="1" shape-rendering="crispEdges"/>
<path d="M297.0 287.5 L281.3 186.0 C277.0 146.0 275.0 108.0 283.0 95.0 C288.0 87.0 301.0 85.0 316.0 91.0 C331.0 97.0 344.0 104.0 354.7 108.7 M332.7 91.0 L354.7 108.7 L329.6 108.7" stroke="#ff0000" stroke-width="1" shape-rendering="crispEdges"/>
<ellipse cx="436" cy="324.4" rx="187" ry="47.8" stroke="#ed1c24" stroke-width="4.500"/>
<text x="91.5" y="18.5" font-size="18" fill="#3f48cc" >D</text>
<text x="107.0" y="21.5" font-size="13" fill="#3f48cc" >1</text>
<text x="61.5" y="59.0" font-size="21" fill="#3f48cc" >d</text>
<text x="92.5" y="342.5" font-size="18" fill="#3f48cc" >D</text>
<text x="106.5" y="347.5" font-size="13" fill="#3f48cc" >2</text>
<text transform="translate(226.5,204.5) rotate(-90)" font-size="17" fill="#3f48cc">H</text>
<text x="588.0" y="184.5" font-size="18" fill="#3f48cc" >m</text>
<text x="560.5" y="158.5" font-size="13" fill="#3f48cc" >1</text>
<text x="560.0" y="139.0" font-size="13" fill="#3f48cc" >2</text>
<text x="554.0" y="122.0" font-size="13" fill="#3f48cc" >3</text>
<text x="546.0" y="104.5" font-size="13" fill="#3f48cc" >4</text>
<text transform="translate(414.9,272.5) rotate(-90)" font-size="15.500" letter-spacing="1.500" fill="#3f48cc">n-2</text>
<text transform="translate(440.29999999999995,271.3) rotate(-90)" font-size="15.500" letter-spacing="1.500" fill="#3f48cc">n-1</text>
<text transform="translate(457,285.5) rotate(-90)" font-size="10.500" fill="#3f48cc">n</text>
<text x="283.0" y="324.5" font-size="20.5" fill="#3f48cc" >n -</text>
<text transform="translate(318.5,323) scale(1.145,1)" font-size="21.500" fill="#3f48cc">number of divisions</text>
<text transform="translate(318.5,349.3) scale(1.165,1)" font-size="21.500" fill="#3f48cc">to construct the unfolding</text>
<text x="284.5" y="388.0" font-size="20.5" fill="#3f48cc" >m -</text>
<text transform="translate(323,388) scale(1.15,1)" font-size="21.500" fill="#3f48cc">seam width</text>
</svg></div>
<!-- controls: coordinates relative to (114,123) -->
<div class="t lb" style="left:670px;top:50px;font-size:14.500px">d =</div>
<div class="t lb" style="left:662px;top:73px;font-size:14.500px">D</div><div class="t lb" style="left:677px;top:79px;font-size:12px">1</div><div class="t lb" style="left:686px;top:73px;font-size:14.500px">=</div>
<div class="t lb" style="left:662px;top:96px;font-size:14.500px">D</div><div class="t lb" style="left:677px;top:102px;font-size:12px">2</div><div class="t lb" style="left:686px;top:96px;font-size:14.500px">=</div>
<div class="t lb" style="left:669px;top:119px;font-size:14.500px">H =</div>
<div class="inp" style="left:703px;top:47px;width:100px;height:20px"><div class="t" style="left:3px;top:3px;font-size:11.500px;letter-spacing:-.35px">30</div></div>
<div class="inp" style="left:703px;top:70px;width:100px;height:20px"><div class="t" style="left:3px;top:3px;font-size:11.500px;letter-spacing:-.35px">100</div></div>
<div class="inp" style="left:703px;top:93px;width:100px;height:20px"><div class="t" style="left:3px;top:3px;font-size:11.500px;letter-spacing:-.35px">200</div></div>
<div class="inp" style="left:703px;top:116px;width:100px;height:20px"><div class="t" style="left:3px;top:3px;font-size:11.500px;letter-spacing:-.35px">200</div></div>
<div class="t" style="left:808px;top:51px;font-size:12px;letter-spacing:-1px;color:#000">mm.</div>
<div class="t" style="left:808px;top:72px;font-size:12px;letter-spacing:-1px;color:#000">mm.</div>
<div class="t" style="left:808px;top:96px;font-size:12px;letter-spacing:-1px;color:#000">mm.</div>
<div class="t" style="left:808px;top:121px;font-size:12px;letter-spacing:-1px;color:#000">mm.</div>
<div class="btn" style="left:854px;top:48px;width:192px;height:20px;line-height:19px;white-space:pre">Get  d  from edditor</div>
<div class="btn" style="left:854px;top:71px;width:192px;height:20px;line-height:19px;white-space:pre">Get  D1  from edditor</div>
<div class="btn" style="left:854px;top:94px;width:192px;height:20px;line-height:19px;white-space:pre">Get  D2  from edditor</div>
<div class="btn" style="left:854px;top:117px;width:192px;height:20px;line-height:19px;white-space:pre">Get  H  from edditor</div>
<!-- radios -->
<div class="abs" style="left:678px;top:195px;width:13px;height:13px;border-radius:50%;border:1px solid #333;background:#fff;box-sizing:border-box"></div>
<div class="abs" style="left:681px;top:198px;width:7px;height:7px;border-radius:50%;background:#333"></div>
<div class="t" style="left:695px;top:194px;font-size:15px;color:#000;letter-spacing:0">UNFOLDING ( DEVELOPING )</div>
<div class="abs" style="left:678px;top:219px;width:13px;height:13px;border-radius:50%;border:1px solid #333;background:#fff;box-sizing:border-box"></div>
<div class="t" style="left:700px;top:218px;font-size:15px;color:#000">3D</div>
<!-- checkbox -->
<div class="abs" style="left:677px;top:273px;width:13px;height:13px;border:1px solid #333;background:#fff;box-sizing:border-box"></div>
<svg class="abs" style="left:678px;top:274px" width="11" height="11"><path d="M1.500 5.500l3 3 5-6.500" fill="none" stroke="#222" stroke-width="1.200"/></svg>
<div class="t" style="left:695px;top:272px;font-size:15.500px;color:#000;letter-spacing:.3px">auxiliary ( seam ) lines</div>
<div class="btn" style="left:678px;top:296px;width:165px;height:37px;border:2px solid #0078d7;font-size:19.500px;line-height:32px">OK</div>
<!-- n, m -->
<div class="t lb" style="left:657px;top:373px;font-size:14.500px">n =</div>
<div class="t lb" style="left:654px;top:395px;font-size:14.500px">m =</div>
<div class="inp" style="left:688px;top:368px;width:100px;height:20px"><div class="t" style="left:3px;top:3px;font-size:11.500px;letter-spacing:-.35px">36</div></div>
<div class="inp" style="left:688px;top:392px;width:100px;height:20px"><div class="t" style="left:3px;top:3px;font-size:11.500px;letter-spacing:-.35px">5</div></div>
<div class="t" style="left:795px;top:374px;font-size:13px;color:#000;letter-spacing:-.05px">divisions for</div>
<div class="t" style="left:872px;top:372px;font-size:16px;color:#000">360°</div>
<div class="t" style="left:793px;top:395px;font-size:12px;letter-spacing:-1px;color:#000">mm.</div>
<!-- size grip -->
<div class="abs" style="left:1051px;top:445px;width:11px;height:11px;background:repeating-linear-gradient(0deg,#f0f0f0 0 2px,transparent 2px 3px),repeating-linear-gradient(90deg,#f0f0f0 0 2px,#b0b0b0 2px 3px);clip-path:polygon(100% 0,100% 100%,0 100%)"></div>
</div>
</body>
</html>
